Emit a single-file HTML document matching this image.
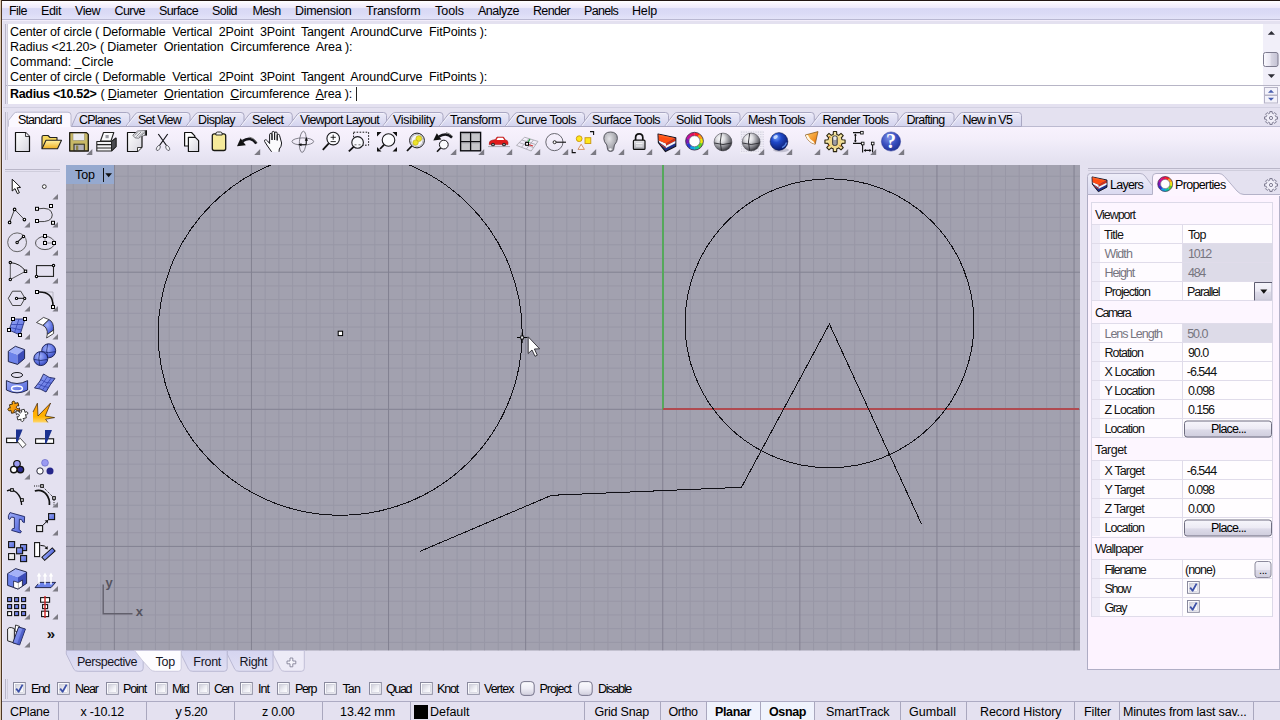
<!DOCTYPE html>
<html lang="en"><head><meta charset="utf-8"><title>Rhinoceros - Top</title>
<style>

html,body{margin:0;padding:0;}
body{width:1280px;height:720px;overflow:hidden;position:relative;background:#e4e1f0;font-family:"Liberation Sans",sans-serif;font-size:12.5px;color:#000;}
.a{position:absolute;}
.t{position:absolute;white-space:pre;line-height:20px;height:20px;}
svg{position:absolute;overflow:visible;}

</style></head>
<body>
<div class="a" style="left:2px;top:0;width:1278px;height:1px;background:#221612"></div><div class="a" style="left:2px;top:1px;width:1px;height:719px;background:#edeafc"></div>
<div class="a" style="left:0;top:1px;width:1280px;height:18px;background:linear-gradient(#ffffff 0%,#f6f2fd 20%,#eeeafa 38%,#d9d9f5 42%,#dbdbf6 70%,#e3e3f9 100%)"></div>
<div class="a" style="left:0;top:19px;width:1280px;height:1px;background:#b9b8d2"></div>
<div class="a" style="left:0;top:20px;width:1280px;height:1px;background:#f3eefb"></div>
<span class="t " style="left:9.00px;top:0.50px;font-size:12.5px;letter-spacing:-0.535px;color:#000;">File</span>
<span class="t " style="left:41.00px;top:0.50px;font-size:12.5px;letter-spacing:-0.385px;color:#000;">Edit</span>
<span class="t " style="left:75.00px;top:0.50px;font-size:12.5px;letter-spacing:-0.467px;color:#000;">View</span>
<span class="t " style="left:114.50px;top:0.50px;font-size:12.5px;letter-spacing:-0.569px;color:#000;">Curve</span>
<span class="t " style="left:159.00px;top:0.50px;font-size:12.5px;letter-spacing:-0.583px;color:#000;">Surface</span>
<span class="t " style="left:212.00px;top:0.50px;font-size:12.5px;letter-spacing:-0.559px;color:#000;">Solid</span>
<span class="t " style="left:252.50px;top:0.50px;font-size:12.5px;letter-spacing:-0.642px;color:#000;">Mesh</span>
<span class="t " style="left:295.00px;top:0.50px;font-size:12.5px;letter-spacing:-0.284px;color:#000;">Dimension</span>
<span class="t " style="left:366.00px;top:0.50px;font-size:12.5px;letter-spacing:-0.221px;color:#000;">Transform</span>
<span class="t " style="left:435.00px;top:0.50px;font-size:12.5px;letter-spacing:-0.036px;color:#000;">Tools</span>
<span class="t " style="left:478.00px;top:0.50px;font-size:12.5px;letter-spacing:-0.496px;color:#000;">Analyze</span>
<span class="t " style="left:533.00px;top:0.50px;font-size:12.5px;letter-spacing:-0.666px;color:#000;">Render</span>
<span class="t " style="left:584.00px;top:0.50px;font-size:12.5px;letter-spacing:-0.703px;color:#000;">Panels</span>
<span class="t " style="left:632.00px;top:0.50px;font-size:12.5px;letter-spacing:-0.177px;color:#000;">Help</span>
<div class="a" style="left:0;top:0;width:1px;height:720px;background:#dcc8ae"></div>
<div class="a" style="left:1px;top:0;width:1px;height:720px;background:#4c3622"></div>
<div class="a" style="left:8px;top:24px;width:1255px;height:61px;background:#fff"></div>
<div class="a" style="left:5px;top:85px;width:1275px;height:1px;background:#b7b5c6"></div>
<div class="a" style="left:8px;top:86px;width:1255px;height:18px;background:#fff"></div>
<div class="a" style="left:3px;top:107px;width:1277px;height:1px;background:#d3d1e2"></div>
<div class="a" style="left:5px;top:24px;width:1px;height:80px;background:#b9b6c8"></div>
<div class="a" style="left:7px;top:24px;width:1px;height:80px;background:#cfcddc"></div>
<span class="t " style="left:10.00px;top:21.50px;font-size:12.5px;letter-spacing:-0.146px;color:#000;">Center of circle ( Deformable  Vertical  2Point  3Point  Tangent  AroundCurve  FitPoints ):</span>
<span class="t " style="left:10.00px;top:36.50px;font-size:12.5px;letter-spacing:-0.124px;color:#000;">Radius &lt;21.20&gt; ( Diameter  Orientation  Circumference  Area ):</span>
<span class="t " style="left:10.00px;top:51.50px;font-size:12.5px;letter-spacing:-0.000px;color:#000;">Command: _Circle</span>
<span class="t " style="left:10.00px;top:66.50px;font-size:12.5px;letter-spacing:-0.146px;color:#000;">Center of circle ( Deformable  Vertical  2Point  3Point  Tangent  AroundCurve  FitPoints ):</span>
<span class="t " style="left:10.00px;top:84.00px;font-size:12.5px;letter-spacing:-0.323px;color:#000;font-weight:bold;">Radius &lt;10.52&gt;</span>
<span class="t" style="left:100.5px;top:84px;font-size:12.5px;letter-spacing:-0.147px">( <u>D</u>iameter  <u>O</u>rientation  <u>C</u>ircumference  <u>A</u>rea ):</span>
<div class="a" style="left:356px;top:87px;width:1px;height:14px;background:#222"></div>
<div class="a" style="left:1263px;top:24px;width:17px;height:61px;background:#f1eff9"></div>
<svg style="left:1263px;top:23px" width="17" height="62"><path d="M4.8 11.8 L8.4 8 L12 11.8 Z" fill="#2e2e36"/><path d="M4.8 51.2 L8.4 55 L12 51.2 Z" fill="#2e2e36"/><rect x="0.5" y="29.5" width="14.5" height="14" rx="2" fill="url(#thg)" stroke="#7c7a8e"/><defs><linearGradient id="thg" x1="0" x2="1" y1="0" y2="0"><stop offset="0" stop-color="#fbfaff"/><stop offset="0.45" stop-color="#e9e7f2"/><stop offset="0.55" stop-color="#d6d4e2"/><stop offset="1" stop-color="#c3c1d3"/></linearGradient></defs></svg>
<div class="a" style="left:1263px;top:86px;width:17px;height:18px;background:#f6f4fc"></div>
<svg style="left:1264px;top:87px" width="15" height="17"><rect x="0.5" y="0.5" width="13" height="7.5" fill="#f3f2fa" stroke="#b5b3c6"/><rect x="0.5" y="8.5" width="13" height="7.5" fill="#f3f2fa" stroke="#b5b3c6"/><path d="M4 5.8 L7 2.8 L10 5.8 Z" fill="#4a5fb0"/><path d="M4 10.8 L7 13.8 L10 10.8 Z" fill="#4a5fb0"/></svg>
<svg style="left:0;top:105px" width="1280" height="26" viewBox="0 105 1280 26"><defs><linearGradient id="tbg" x1="0" x2="0" y1="0" y2="1"><stop offset="0" stop-color="#ecebf8"/><stop offset="1" stop-color="#d3d3ee"/></linearGradient></defs><path d="M8 126.5 H1280" stroke="#bcbad0" fill="none"/><path d="M71.5 126.5 L76.7 114.7 Q77.7 112.5 80.5 112.5 L126.75 112.5 Q129.75 112.5 129.75 115.5 L129.75 126.5 Z" fill="url(#tbg)" stroke="#a9a7c2" stroke-width="1"/><path d="M125.75 126.5 L134.95 114.3 Q136.35 112.5 139.35 112.5 L187.0 112.5 Q190.0 112.5 190.0 115.5 L190.0 126.5 Z" fill="url(#tbg)" stroke="#a9a7c2" stroke-width="1"/><path d="M127.05 126.0 L135.95 114.8 Q136.95 113.5 139.35 113.5 L187.0 113.5" fill="none" stroke="#f3f2fb" stroke-width="1"/><path d="M186.0 126.5 L195.2 114.3 Q196.6 112.5 199.6 112.5 L241.0 112.5 Q244.0 112.5 244.0 115.5 L244.0 126.5 Z" fill="url(#tbg)" stroke="#a9a7c2" stroke-width="1"/><path d="M187.3 126.0 L196.2 114.8 Q197.2 113.5 199.6 113.5 L241.0 113.5" fill="none" stroke="#f3f2fb" stroke-width="1"/><path d="M240.0 126.5 L249.2 114.3 Q250.6 112.5 253.6 112.5 L289.25 112.5 Q292.25 112.5 292.25 115.5 L292.25 126.5 Z" fill="url(#tbg)" stroke="#a9a7c2" stroke-width="1"/><path d="M241.3 126.0 L250.2 114.8 Q251.2 113.5 253.6 113.5 L289.25 113.5" fill="none" stroke="#f3f2fb" stroke-width="1"/><path d="M288.25 126.5 L297.45 114.3 Q298.85 112.5 301.85 112.5 L383.5 112.5 Q386.5 112.5 386.5 115.5 L386.5 126.5 Z" fill="url(#tbg)" stroke="#a9a7c2" stroke-width="1"/><path d="M289.55 126.0 L298.45 114.8 Q299.45 113.5 301.85 113.5 L383.5 113.5" fill="none" stroke="#f3f2fb" stroke-width="1"/><path d="M382.5 126.5 L391.7 114.3 Q393.1 112.5 396.1 112.5 L440.0 112.5 Q443.0 112.5 443.0 115.5 L443.0 126.5 Z" fill="url(#tbg)" stroke="#a9a7c2" stroke-width="1"/><path d="M383.8 126.0 L392.7 114.8 Q393.7 113.5 396.1 113.5 L440.0 113.5" fill="none" stroke="#f3f2fb" stroke-width="1"/><path d="M439.0 126.5 L448.2 114.3 Q449.6 112.5 452.6 112.5 L506.0 112.5 Q509.0 112.5 509.0 115.5 L509.0 126.5 Z" fill="url(#tbg)" stroke="#a9a7c2" stroke-width="1"/><path d="M440.3 126.0 L449.2 114.8 Q450.2 113.5 452.6 113.5 L506.0 113.5" fill="none" stroke="#f3f2fb" stroke-width="1"/><path d="M505.0 126.5 L514.2 114.3 Q515.6 112.5 518.6 112.5 L581.5 112.5 Q584.5 112.5 584.5 115.5 L584.5 126.5 Z" fill="url(#tbg)" stroke="#a9a7c2" stroke-width="1"/><path d="M506.3 126.0 L515.2 114.8 Q516.2 113.5 518.6 113.5 L581.5 113.5" fill="none" stroke="#f3f2fb" stroke-width="1"/><path d="M580.5 126.5 L589.7 114.3 Q591.1 112.5 594.1 112.5 L665.5 112.5 Q668.5 112.5 668.5 115.5 L668.5 126.5 Z" fill="url(#tbg)" stroke="#a9a7c2" stroke-width="1"/><path d="M581.8 126.0 L590.7 114.8 Q591.7 113.5 594.1 113.5 L665.5 113.5" fill="none" stroke="#f3f2fb" stroke-width="1"/><path d="M664.5 126.5 L673.7 114.3 Q675.1 112.5 678.1 112.5 L737.0 112.5 Q740.0 112.5 740.0 115.5 L740.0 126.5 Z" fill="url(#tbg)" stroke="#a9a7c2" stroke-width="1"/><path d="M665.8 126.0 L674.7 114.8 Q675.7 113.5 678.1 113.5 L737.0 113.5" fill="none" stroke="#f3f2fb" stroke-width="1"/><path d="M736.0 126.5 L745.2 114.3 Q746.6 112.5 749.6 112.5 L811.25 112.5 Q814.25 112.5 814.25 115.5 L814.25 126.5 Z" fill="url(#tbg)" stroke="#a9a7c2" stroke-width="1"/><path d="M737.3 126.0 L746.2 114.8 Q747.2 113.5 749.6 113.5 L811.25 113.5" fill="none" stroke="#f3f2fb" stroke-width="1"/><path d="M810.25 126.5 L819.45 114.3 Q820.85 112.5 823.85 112.5 L895.0 112.5 Q898.0 112.5 898.0 115.5 L898.0 126.5 Z" fill="url(#tbg)" stroke="#a9a7c2" stroke-width="1"/><path d="M811.55 126.0 L820.45 114.8 Q821.45 113.5 823.85 113.5 L895.0 113.5" fill="none" stroke="#f3f2fb" stroke-width="1"/><path d="M894.0 126.5 L903.2 114.3 Q904.6 112.5 907.6 112.5 L951.0 112.5 Q954.0 112.5 954.0 115.5 L954.0 126.5 Z" fill="url(#tbg)" stroke="#a9a7c2" stroke-width="1"/><path d="M895.3 126.0 L904.2 114.8 Q905.2 113.5 907.6 113.5 L951.0 113.5" fill="none" stroke="#f3f2fb" stroke-width="1"/><path d="M950.0 126.5 L959.2 114.3 Q960.6 112.5 963.6 112.5 L1018.5 112.5 Q1021.5 112.5 1021.5 115.5 L1021.5 126.5 Z" fill="url(#tbg)" stroke="#a9a7c2" stroke-width="1"/><path d="M951.3 126.0 L960.2 114.8 Q961.2 113.5 963.6 113.5 L1018.5 113.5" fill="none" stroke="#f3f2fb" stroke-width="1"/><path d="M8.3 127.5 L8.3 120.6 L14.2 113.2 Q15 112.2 17.5 112.2 L68 112.2 Q71 112.2 71 115.2 L71 127.5 Z" fill="#fbf8ff" stroke="none"/><path d="M8.3 126.5 L8.3 120.6 L14.2 113.2 Q15 112.2 17.5 112.2 L68 112.2 Q71 112.2 71 115.2 L71 126.5" fill="none" stroke="#b9b7cd"/></svg>
<div class="a" style="left:8px;top:127px;width:1272px;height:35px;background:linear-gradient(#f8f2fd,#f3eefa 35%,#e9e6f4 75%,#e4e1f0)"></div>
<span class="t " style="left:18.00px;top:110.00px;font-size:12.5px;letter-spacing:-0.904px;color:#000;">Standard</span>
<span class="t " style="left:79.00px;top:110.00px;font-size:12.5px;letter-spacing:-0.821px;color:#000;">CPlanes</span>
<span class="t " style="left:138.00px;top:110.00px;font-size:12.5px;letter-spacing:-0.763px;color:#000;">Set View</span>
<span class="t " style="left:198.00px;top:110.00px;font-size:12.5px;letter-spacing:-0.569px;color:#000;">Display</span>
<span class="t " style="left:252.00px;top:110.00px;font-size:12.5px;letter-spacing:-0.540px;color:#000;">Select</span>
<span class="t " style="left:300.00px;top:110.00px;font-size:12.5px;letter-spacing:-0.694px;color:#000;">Viewport Layout</span>
<span class="t " style="left:393.00px;top:110.00px;font-size:12.5px;letter-spacing:-0.292px;color:#000;">Visibility</span>
<span class="t " style="left:450.00px;top:110.00px;font-size:12.5px;letter-spacing:-0.610px;color:#000;">Transform</span>
<span class="t " style="left:516.00px;top:110.00px;font-size:12.5px;letter-spacing:-0.525px;color:#000;">Curve Tools</span>
<span class="t " style="left:592.00px;top:110.00px;font-size:12.5px;letter-spacing:-0.577px;color:#000;">Surface Tools</span>
<span class="t " style="left:676.00px;top:110.00px;font-size:12.5px;letter-spacing:-0.475px;color:#000;">Solid Tools</span>
<span class="t " style="left:748.00px;top:110.00px;font-size:12.5px;letter-spacing:-0.599px;color:#000;">Mesh Tools</span>
<span class="t " style="left:822.50px;top:110.00px;font-size:12.5px;letter-spacing:-0.619px;color:#000;">Render Tools</span>
<span class="t " style="left:906.50px;top:110.00px;font-size:12.5px;letter-spacing:-0.721px;color:#000;">Drafting</span>
<span class="t " style="left:962.50px;top:110.00px;font-size:12.5px;letter-spacing:-0.830px;color:#000;">New in V5</span>
<div class="a" style="left:5px;top:112px;width:1px;height:48px;background:#b9b6c8"></div>
<div class="a" style="left:7px;top:112px;width:1px;height:48px;background:#cfcddc"></div>
<svg style="left:1263px;top:110px" width="16" height="16" viewBox="-8 -8 16 16"><path d="M6.50 -1.13 L6.50 1.13 L4.86 1.17 L4.26 2.61 L5.40 3.80 L3.80 5.40 L2.61 4.26 L1.17 4.86 L1.13 6.50 L-1.13 6.50 L-1.17 4.86 L-2.61 4.26 L-3.80 5.40 L-5.40 3.80 L-4.26 2.61 L-4.86 1.17 L-6.50 1.13 L-6.50 -1.13 L-4.86 -1.17 L-4.26 -2.61 L-5.40 -3.80 L-3.80 -5.40 L-2.61 -4.26 L-1.17 -4.86 L-1.13 -6.50 L1.13 -6.50 L1.17 -4.86 L2.61 -4.26 L3.80 -5.40 L5.40 -3.80 L4.26 -2.61 L4.86 -1.17Z" fill="#f1eff9" stroke="#7a788e" stroke-width="0.95"/><circle r="1.6" fill="none" stroke="#7a788e" stroke-width="0.95"/></svg>
<svg style="left:0;top:126px" width="1280" height="36" viewBox="0 126 1280 36"><defs>
<linearGradient id="pg" x1="0" x2="1" y1="0" y2="1"><stop offset="0" stop-color="#ffffff"/><stop offset="1" stop-color="#d6d5de"/></linearGradient>
<linearGradient id="fold" x1="0" x2="0" y1="0" y2="1"><stop offset="0" stop-color="#fff3a8"/><stop offset="1" stop-color="#f0b020"/></linearGradient>
<radialGradient id="sph" cx="0.36" cy="0.3" r="0.78"><stop offset="0" stop-color="#ffffff"/><stop offset="0.3" stop-color="#dcdce0"/><stop offset="0.7" stop-color="#77777e"/><stop offset="1" stop-color="#1c1c22"/></radialGradient>
<radialGradient id="bsph" cx="0.35" cy="0.28" r="0.8"><stop offset="0" stop-color="#6fa0ff"/><stop offset="0.35" stop-color="#1f48c8"/><stop offset="1" stop-color="#061460"/></radialGradient>
<radialGradient id="hsph" cx="0.4" cy="0.3" r="0.8"><stop offset="0" stop-color="#7f93e8"/><stop offset="0.5" stop-color="#3a50c0"/><stop offset="1" stop-color="#1c2a88"/></radialGradient>
<radialGradient id="bulb" cx="0.4" cy="0.35" r="0.7"><stop offset="0" stop-color="#e4e4e8"/><stop offset="1" stop-color="#8c8c94"/></radialGradient>
<linearGradient id="lockg" x1="0" x2="0" y1="0" y2="1"><stop offset="0" stop-color="#e8e8ec"/><stop offset="1" stop-color="#a8a8b0"/></linearGradient>
<linearGradient id="coneg" x1="0" x2="1" y1="0" y2="1"><stop offset="0" stop-color="#ffd070"/><stop offset="1" stop-color="#e87000"/></linearGradient>
</defs><path d="M15.5 132.5 H25.5 L29.5 136.5 V151.5 H15.5 Z" fill="url(#pg)" stroke="#111" stroke-width="1.2" stroke-linejoin="round"/><path d="M25.5 132.5 V136.5 H29.5" fill="#e8e8ee" stroke="#111" stroke-width="0.8"/><path d="M42 148.5 V137 Q42 135.5 43.5 135.5 H48 L50 137.5 H57 V140" fill="#f6d860" stroke="#222" stroke-width="1.1" stroke-linejoin="round"/><path d="M42 148.8 L46 140.3 H61.5 L57.5 148.8 Z" fill="url(#fold)" stroke="#222" stroke-width="1.1" stroke-linejoin="round"/><path d="M69.7 132.6 H86.5 L88.3 134.4 V151 H69.7 Z" fill="#c8b866" stroke="#1c1a12" stroke-width="1.3" stroke-linejoin="round"/><rect x="73" y="133.3" width="11.5" height="7.2" fill="#ececf0" stroke="#8c8460" stroke-width="0.5"/><rect x="74" y="144.2" width="10.3" height="6.5" fill="#b4b2ba" stroke="#2a281c" stroke-width="1"/><rect x="76" y="145.5" width="2.3" height="4.5" fill="#8c8244"/><path d="M92.3 149 V155 H86.3 Z" fill="#7c7b84"/><path d="M100.5 141 L103.5 132.5 H113.8 L111 141 Z" fill="#fafafc" stroke="#222" stroke-width="1.1" stroke-linejoin="round"/><rect x="105.5" y="135" width="3.2" height="3.2" fill="#9a9aa2"/><path d="M96.8 141.5 H111.5 L116 138 V146.5 L111.5 151 H96.8 Z" fill="#f2f2f5" stroke="#222" stroke-width="1.1" stroke-linejoin="round"/><path d="M111.5 141.5 L116 138 V146.5 L111.5 151 Z" fill="#4a4a50" stroke="#222" stroke-width="1"/><path d="M97 144.7 H111.5 M97 148 H111.5" stroke="#222" stroke-width="1.2"/><path d="M127.5 132.5 H142 V147 L137.5 151.5 H127.5 Z" fill="url(#pg)" stroke="#111" stroke-width="1.2" stroke-linejoin="round"/><path d="M137.5 151.5 V147.5 H141.5" fill="#fff" stroke="#111" stroke-width="0.8"/><path d="M132.8 135.2 L137.6 131 L145 130.6 V135.4 L141.4 136.2 L138.6 138.2 L135 137.8 Z" fill="#ececf0" stroke="#4a4a52" stroke-width="0.7" stroke-linejoin="round"/><path d="M134.6 135.6 l3.4 -3.4 M136.4 136.6 l4.6 -4.6 M138.6 137 l4.8 -4.8 M141.6 135.4 l2.8 -2.8" stroke="#77777f" stroke-width="0.8" fill="none"/><rect x="145.2" y="130.2" width="1.8" height="5.4" fill="#111"/><path d="M158.3 134 L167.2 146.5 M167.7 134 L158.8 146.5" stroke="#15151a" stroke-width="1.2" fill="none"/><ellipse cx="158.3" cy="148" rx="1.6" ry="2.8" transform="rotate(32 158.3 148)" fill="#f4f4f8" stroke="#55555e" stroke-width="0.8"/><ellipse cx="167.7" cy="148" rx="1.6" ry="2.8" transform="rotate(-32 167.7 148)" fill="#f4f4f8" stroke="#55555e" stroke-width="0.8"/><path d="M184.6 132.5 H191.5 L194.8 135.8 V146 H184.6 Z" fill="#fff" stroke="#111" stroke-width="1.2" stroke-linejoin="round"/><path d="M188.4 137.3 H195.3 L198.6 140.6 V151.5 H188.4 Z" fill="url(#pg)" stroke="#111" stroke-width="1.2" stroke-linejoin="round"/><rect x="212.3" y="133.8" width="13.4" height="16.7" rx="2" fill="#f6ea9a" stroke="#1a1a14" stroke-width="1.3"/><path d="M215.8 134 Q215.8 132 217.5 132 H220.5 Q222.2 132 222.2 134 V135 H215.8 Z" fill="#f2f2f2" stroke="#1a1a14" stroke-width="0.9"/><path d="M256.3 143.6 Q251 135.5 242.5 141.2" fill="none" stroke="#15151a" stroke-width="2.6"/><path d="M256.9 142.4 Q253.5 137.5 249.5 137.2" fill="none" stroke="#777" stroke-width="1"/><path d="M237 146.3 L240.6 138.3 L245.8 145.3 Z" fill="#111"/><path d="M260.2 149 V155 H254.2 Z" fill="#7c7b84"/><path d="M271.6 151.8 L267.5 146 L264.6 141.5 Q264 140 265.3 139.8 Q266.6 139.8 267.6 141 L269.6 143.5 V134.8 Q269.6 133.4 270.8 133.4 Q272 133.4 272 134.8 V140 V132.8 Q272 131.4 273.3 131.4 Q274.6 131.4 274.6 132.8 V140 V133.3 Q274.6 132 275.9 132 Q277.2 132 277.2 133.3 V140.4 V135.6 Q277.2 134.4 278.4 134.4 Q279.6 134.4 279.6 135.6 L281.6 143 Q281.6 146.5 279.3 149 L279 151.8" fill="#fbfbfd" stroke="#18181c" stroke-width="1" stroke-linejoin="round"/><ellipse cx="302.8" cy="141.5" rx="10.8" ry="3.6" fill="none" stroke="#55555e" stroke-width="0.7"/><ellipse cx="302.8" cy="141.8" rx="3.4" ry="10.6" fill="none" stroke="#55555e" stroke-width="0.7" transform="rotate(4 302.8 141.8)"/><path d="M304.8 140.8 L306.3 137 L308 140.8 Z" fill="#111"/><path d="M301.5 143.2 L298 144.6 L301.5 146.2 Z" fill="#111"/><path d="M306.3 140 V144.6 H300" stroke="#111" stroke-width="0.9" fill="none"/><circle cx="333.2" cy="138.6" r="6.3" fill="#fbfbfe" stroke="#18181c" stroke-width="1.1"/><path d="M328.8 143.4 L322.8 149.8" stroke="#111" stroke-width="1.8"/><path d="M330.6 137.3 H335.8 M333.2 134.7 V139.9 M330.6 141.6 H335.8" stroke="#111" stroke-width="0.9"/><rect x="353.6" y="132.2" width="15" height="13" fill="none" stroke="#111" stroke-width="1" stroke-dasharray="1.6 1.4"/><circle cx="357.6" cy="142.4" r="5.8" fill="#f8f8fc" stroke="#18181c" stroke-width="1.1"/><path d="M353.6 146.8 L348.8 151.3" stroke="#111" stroke-width="1.8"/><path d="M354.5 144.8 H356.5 M358.5 144.8 H360.5" stroke="#333" stroke-width="0.7"/><path d="M377 132 h4.5 l-4.5 4.5 Z M397 132 v4.5 l-4.5 -4.5 Z M377 151.6 v-4.5 l4.5 4.5 Z M397 151.6 h-4.5 l4.5 -4.5 Z" fill="#111"/><circle cx="388.5" cy="140" r="6.3" fill="#fbfbfe" stroke="#18181c" stroke-width="1.1"/><path d="M384.2 144.6 L380 149" stroke="#111" stroke-width="1.8"/><circle cx="417" cy="140.5" r="7.4" fill="#f6f6fa" stroke="#18181c" stroke-width="1"/><circle cx="417" cy="140.5" r="6" fill="none" stroke="#88888e" stroke-width="0.6"/><circle cx="418.8" cy="138.6" r="2.9" fill="#ece428" stroke="#b8a810" stroke-width="0.6"/><circle cx="415.6" cy="142.6" r="2.7" fill="#ece428" stroke="#b8a810" stroke-width="0.6"/><path d="M411.8 146 L407 151" stroke="#111" stroke-width="1.8"/><path d="M452 137.6 Q446.5 131.8 439 136.6" fill="none" stroke="#15151a" stroke-width="2.4"/><path d="M452.7 136.4 Q449.5 133 446 132.6" fill="none" stroke="#777" stroke-width="1"/><path d="M433.3 140.6 L436.8 133.2 L441.4 139.6 Z" fill="#111"/><circle cx="443.8" cy="144.6" r="4.4" fill="#fbfbfe" stroke="#18181c" stroke-width="1"/><path d="M440.6 148 L437 151.8" stroke="#111" stroke-width="1.6"/><path d="M456.3 149 V155 H450.3 Z" fill="#7c7b84"/><rect x="460.6" y="132.4" width="20" height="18.4" fill="#c6c6ca" stroke="#0c0c10" stroke-width="1.4"/><path d="M470.6 132.4 V150.8 M460.6 141.6 H480.6" stroke="#0c0c10" stroke-width="1.3"/><path d="M461.5 133.6 H469.6 M471.6 133.6 H479.6 M461.5 142.8 H469.6 M471.6 142.8 H479.6" stroke="#8e8e96" stroke-width="0.8"/><path d="M484.2 149 V155 H478.2 Z" fill="#7c7b84"/><path d="M489.2 144.6 Q488.6 141 492 140.2 L495.4 139.6 L497 137 H503.5 L505.5 140 L507.2 140.6 Q508.4 142 508 144.6 Z" fill="#e01c1c" stroke="#9c1010" stroke-width="0.5"/><path d="M497.8 137.8 H502.8 L504.3 140 H496.5 Z" fill="#fff"/><circle cx="493" cy="144.6" r="1.9" fill="#222"/><circle cx="504" cy="144.6" r="1.9" fill="#222"/><circle cx="493" cy="144.6" r="0.8" fill="#ccc"/><circle cx="504" cy="144.6" r="0.8" fill="#ccc"/><path d="M488 146.6 H510" stroke="#9a9aa2" stroke-width="0.8"/><path d="M512.2 149 V155 H506.2 Z" fill="#7c7b84"/><path d="M516.5 145.4 L524.5 137.2 L538 141.4 L531.2 151 Z M519.2 142.6 L533.6 147.6 M521.8 140 L536 144.6 M521.5 147.2 L529 138.6 M526.4 149 L533.5 140" fill="none" stroke="#a2a2aa" stroke-width="0.8"/><path d="M527 143.8 L530 139.2" stroke="#2ea040" stroke-width="1.2"/><path d="M527.6 144.3 L533 146" stroke="#d03030" stroke-width="1.2"/><rect x="525.6" y="142.4" width="2.9" height="2.9" fill="#fff" stroke="#000" stroke-width="1"/><path d="M540.2 149 V155 H534.2 Z" fill="#7c7b84"/><circle cx="554.4" cy="142.1" r="8.6" fill="none" stroke="#5a5a62" stroke-width="0.9"/><path d="M555.5 142.2 H566" stroke="#111" stroke-width="1.1"/><circle cx="554.6" cy="142.2" r="1.5" fill="#fff" stroke="#111" stroke-width="0.9"/><path d="M568.2 149 V155 H562.2 Z" fill="#7c7b84"/><circle cx="579.2" cy="138.7" r="2.9" fill="#ffe81a" stroke="#c89410" stroke-width="0.9"/><rect x="585" y="137.7" width="5.8" height="5.8" fill="#ffe81a" stroke="#c89410" stroke-width="0.9"/><path d="M578 149.4 L581.2 144.2 L584.4 149.4 Z" fill="#fdf6f0" stroke="#d08858" stroke-width="0.9"/><path d="M590 131.6 H593.6 V135" fill="none" stroke="#111" stroke-width="1.1"/><path d="M572.2 149.2 V152.6 H575.8" fill="none" stroke="#111" stroke-width="1.1"/><path d="M596.2 149 V155 H590.2 Z" fill="#7c7b84"/><path d="M610.6 132 Q617.4 132 617.4 138.6 Q617.4 141.6 614.4 145 L613.6 149.6 Q613.4 151.4 610.6 151.4 Q607.8 151.4 607.6 149.6 L606.8 145 Q603.8 141.6 603.8 138.6 Q603.8 132 610.6 132 Z" fill="url(#bulb)" stroke="#4a4a52" stroke-width="0.9"/><ellipse cx="610.4" cy="149.3" rx="1.5" ry="1.1" fill="#f4f4f8"/><path d="M624.2 149 V155 H618.2 Z" fill="#7c7b84"/><path d="M635.6 140.4 V137.6 Q635.6 133.8 639.2 133.8 Q642.8 133.8 642.8 137.6 V140.4" fill="none" stroke="#111" stroke-width="1.7"/><rect x="633.4" y="140.2" width="11.6" height="9.2" rx="1" fill="url(#lockg)" stroke="#111" stroke-width="1.2"/><path d="M636 143.6 H642.5 M636 146 H642.5" stroke="#f8f8fa" stroke-width="0.9"/><path d="M652.2 149 V155 H646.2 Z" fill="#7c7b84"/><g transform="translate(0.00 0.00)"><path d="M658 134 L675.8 137.7 V146.2 L665.5 151.6 L658.4 142.6 Z" fill="#1c2f8c" stroke="#14141e" stroke-width="1.1" stroke-linejoin="round"/><path d="M658.6 140.2 L666 143.4 V147 L659.4 142.6 Z" fill="#f4f4f8"/><path d="M659.8 143.4 L666 147.4 V148.6 L661.4 145.6 Z" fill="#e04020"/><path d="M666 143.4 L675.3 138.6 V141 L666 145.8 Z" fill="#d83010"/><path d="M666 145.8 L675.3 141 V143.2 L666 148 Z" fill="#f4f4f8"/><path d="M658.5 134.5 L675.3 138.2 L666 143.4 L658.7 140.4 Z" fill="#ff4c12"/><path d="M658.5 134.5 L675.3 138.2 L670 138.4 L659 136.4 Z" fill="#ff6a28" opacity="0.7"/></g><path d="M680.2 149 V155 H674.2 Z" fill="#7c7b84"/><g transform="translate(694.5 141.2) scale(1.0) translate(-694.5 -141.2)"><path d="M694.32 132.40 A8.8 8.8 0 0 1 699.81 134.19 L697.82 136.82 A5.5 5.5 0 0 0 694.39 135.70 Z" fill="#ff2020"/><path d="M699.53 133.98 A8.8 8.8 0 0 1 702.92 138.65 L699.76 139.61 A5.5 5.5 0 0 0 697.64 136.69 Z" fill="#ff9a10"/><path d="M702.81 138.31 A8.8 8.8 0 0 1 702.81 144.09 L699.70 143.00 A5.5 5.5 0 0 0 699.70 139.40 Z" fill="#f4e810"/><path d="M702.92 143.75 A8.8 8.8 0 0 1 699.53 148.42 L697.64 145.71 A5.5 5.5 0 0 0 699.76 142.79 Z" fill="#60d020"/><path d="M699.81 148.21 A8.8 8.8 0 0 1 694.32 150.00 L694.39 146.70 A5.5 5.5 0 0 0 697.82 145.58 Z" fill="#10c8a0"/><path d="M694.68 150.00 A8.8 8.8 0 0 1 689.19 148.21 L691.18 145.58 A5.5 5.5 0 0 0 694.61 146.70 Z" fill="#10a0e8"/><path d="M689.47 148.42 A8.8 8.8 0 0 1 686.08 143.75 L689.24 142.79 A5.5 5.5 0 0 0 691.36 145.71 Z" fill="#2838d0"/><path d="M686.19 144.09 A8.8 8.8 0 0 1 686.19 138.31 L689.30 139.40 A5.5 5.5 0 0 0 689.30 143.00 Z" fill="#7a18b8"/><path d="M686.08 138.65 A8.8 8.8 0 0 1 689.47 133.98 L691.36 136.69 A5.5 5.5 0 0 0 689.24 139.61 Z" fill="#c010a0"/><path d="M689.19 134.19 A8.8 8.8 0 0 1 694.68 132.40 L694.61 135.70 A5.5 5.5 0 0 0 691.18 136.82 Z" fill="#e01060"/><circle cx="694.5" cy="141.2" r="8.9" fill="none" stroke="#2a1a3a" stroke-width="0.9" opacity="0.85"/><circle cx="694.5" cy="141.2" r="5.5" fill="#fff" stroke="#4a4a60" stroke-width="0.6"/></g><path d="M708.2 149 V155 H702.2 Z" fill="#7c7b84"/><circle cx="723" cy="142" r="8.9" fill="url(#sph)" stroke="#4a4a50" stroke-width="0.6"/><path d="M714.2 143 Q723 146 731.8 143" fill="none" stroke="#2a2a30" stroke-width="0.9"/><path d="M721.5 133.2 Q719 142 721.5 150.8" fill="none" stroke="#2a2a30" stroke-width="0.9"/><rect x="740" y="130.5" width="23" height="23" fill="#efedf6"/><path d="M741.0 131.5h1.2v1.2h-1.2zM743.4 131.5h1.2v1.2h-1.2zM745.8 131.5h1.2v1.2h-1.2zM748.2 131.5h1.2v1.2h-1.2zM750.6 131.5h1.2v1.2h-1.2zM753.0 131.5h1.2v1.2h-1.2zM755.4 131.5h1.2v1.2h-1.2zM757.8 131.5h1.2v1.2h-1.2zM760.2 131.5h1.2v1.2h-1.2zM762.6 131.5h1.2v1.2h-1.2zM741.0 133.9h1.2v1.2h-1.2zM743.4 133.9h1.2v1.2h-1.2zM745.8 133.9h1.2v1.2h-1.2zM748.2 133.9h1.2v1.2h-1.2zM750.6 133.9h1.2v1.2h-1.2zM753.0 133.9h1.2v1.2h-1.2zM755.4 133.9h1.2v1.2h-1.2zM757.8 133.9h1.2v1.2h-1.2zM760.2 133.9h1.2v1.2h-1.2zM762.6 133.9h1.2v1.2h-1.2zM741.0 136.3h1.2v1.2h-1.2zM743.4 136.3h1.2v1.2h-1.2zM745.8 136.3h1.2v1.2h-1.2zM748.2 136.3h1.2v1.2h-1.2zM750.6 136.3h1.2v1.2h-1.2zM753.0 136.3h1.2v1.2h-1.2zM755.4 136.3h1.2v1.2h-1.2zM757.8 136.3h1.2v1.2h-1.2zM760.2 136.3h1.2v1.2h-1.2zM762.6 136.3h1.2v1.2h-1.2zM741.0 138.7h1.2v1.2h-1.2zM743.4 138.7h1.2v1.2h-1.2zM745.8 138.7h1.2v1.2h-1.2zM748.2 138.7h1.2v1.2h-1.2zM750.6 138.7h1.2v1.2h-1.2zM753.0 138.7h1.2v1.2h-1.2zM755.4 138.7h1.2v1.2h-1.2zM757.8 138.7h1.2v1.2h-1.2zM760.2 138.7h1.2v1.2h-1.2zM762.6 138.7h1.2v1.2h-1.2zM741.0 141.1h1.2v1.2h-1.2zM743.4 141.1h1.2v1.2h-1.2zM745.8 141.1h1.2v1.2h-1.2zM748.2 141.1h1.2v1.2h-1.2zM750.6 141.1h1.2v1.2h-1.2zM753.0 141.1h1.2v1.2h-1.2zM755.4 141.1h1.2v1.2h-1.2zM757.8 141.1h1.2v1.2h-1.2zM760.2 141.1h1.2v1.2h-1.2zM762.6 141.1h1.2v1.2h-1.2zM741.0 143.5h1.2v1.2h-1.2zM743.4 143.5h1.2v1.2h-1.2zM745.8 143.5h1.2v1.2h-1.2zM748.2 143.5h1.2v1.2h-1.2zM750.6 143.5h1.2v1.2h-1.2zM753.0 143.5h1.2v1.2h-1.2zM755.4 143.5h1.2v1.2h-1.2zM757.8 143.5h1.2v1.2h-1.2zM760.2 143.5h1.2v1.2h-1.2zM762.6 143.5h1.2v1.2h-1.2zM741.0 145.9h1.2v1.2h-1.2zM743.4 145.9h1.2v1.2h-1.2zM745.8 145.9h1.2v1.2h-1.2zM748.2 145.9h1.2v1.2h-1.2zM750.6 145.9h1.2v1.2h-1.2zM753.0 145.9h1.2v1.2h-1.2zM755.4 145.9h1.2v1.2h-1.2zM757.8 145.9h1.2v1.2h-1.2zM760.2 145.9h1.2v1.2h-1.2zM762.6 145.9h1.2v1.2h-1.2zM741.0 148.3h1.2v1.2h-1.2zM743.4 148.3h1.2v1.2h-1.2zM745.8 148.3h1.2v1.2h-1.2zM748.2 148.3h1.2v1.2h-1.2zM750.6 148.3h1.2v1.2h-1.2zM753.0 148.3h1.2v1.2h-1.2zM755.4 148.3h1.2v1.2h-1.2zM757.8 148.3h1.2v1.2h-1.2zM760.2 148.3h1.2v1.2h-1.2zM762.6 148.3h1.2v1.2h-1.2zM741.0 150.7h1.2v1.2h-1.2zM743.4 150.7h1.2v1.2h-1.2zM745.8 150.7h1.2v1.2h-1.2zM748.2 150.7h1.2v1.2h-1.2zM750.6 150.7h1.2v1.2h-1.2zM753.0 150.7h1.2v1.2h-1.2zM755.4 150.7h1.2v1.2h-1.2zM757.8 150.7h1.2v1.2h-1.2zM760.2 150.7h1.2v1.2h-1.2zM762.6 150.7h1.2v1.2h-1.2z" fill="#d2d0de"/><circle cx="751.2" cy="142" r="8.9" fill="url(#sph)" stroke="#4a4a50" stroke-width="0.6"/><path d="M742.4000000000001 143 Q751.2 146 760.0 143" fill="none" stroke="#2a2a30" stroke-width="0.9"/><path d="M749.7 133.2 Q747.2 142 749.7 150.8" fill="none" stroke="#2a2a30" stroke-width="0.9"/><path d="M764.2 149 V155 H758.2 Z" fill="#7c7b84"/><ellipse cx="781" cy="150" rx="8" ry="2.2" fill="#b8b6c8" opacity="0.8"/><circle cx="779" cy="141.5" r="8.9" fill="url(#bsph)" stroke="#06103c" stroke-width="0.5"/><ellipse cx="775.6" cy="137" rx="2.4" ry="1.6" fill="#cfe0ff" opacity="0.9" transform="rotate(-30 775.6 137)"/><path d="M782 147.5 Q785.5 146 786.5 142.5" stroke="#6fa0ff" stroke-width="1.2" fill="none" opacity="0.8"/><path d="M792.2 149 V155 H786.2 Z" fill="#7c7b84"/><path d="M805.3 135 L818 131.6 L815.2 144.2 Q808.5 143 805.3 135 Z" fill="url(#coneg)" stroke="#7a4a10" stroke-width="0.7" stroke-linejoin="round"/><path d="M805.6 135.2 Q808.5 142.5 815 144 L813.6 141.5 Q809.5 139.5 807.8 135 Z" fill="#fff8e8"/><path d="M820.2 149 V155 H814.2 Z" fill="#7c7b84"/><path d="M845.07 140.00 L845.07 143.20 L842.07 143.42 L841.28 145.32 L843.25 147.60 L841.00 149.85 L838.72 147.88 L836.82 148.67 L836.60 151.67 L833.40 151.67 L833.18 148.67 L831.28 147.88 L829.00 149.85 L826.75 147.60 L828.72 145.32 L827.93 143.42 L824.93 143.20 L824.93 140.00 L827.93 139.78 L828.72 137.88 L826.75 135.60 L829.00 133.35 L831.28 135.32 L833.18 134.53 L833.40 131.53 L836.60 131.53 L836.82 134.53 L838.72 135.32 L841.00 133.35 L843.25 135.60 L841.28 137.88 L842.07 139.78Z" fill="#f4e4a0" stroke="#2a2410" stroke-width="1.1" stroke-linejoin="round"/><circle cx="835" cy="141.6" r="6.4" fill="#f0d888"/><path d="M828.5 146 l1.5 -1 M841 146.5 l-1.5 -1 M829 136.5 l1.5 1" stroke="#d07018" stroke-width="1.3"/><rect x="832.6" y="136" width="4.6" height="9.4" rx="1.6" fill="#9c9ca4" stroke="#2a2a30" stroke-width="0.9"/><rect x="833.4" y="136.6" width="3" height="3.4" rx="1" fill="#e6e6ea"/><path d="M848.2 149 V155 H842.2 Z" fill="#7c7b84"/><path d="M853 132.6 H860.4 M853 143.4 H861.4 M855.4 134 V142 M862.6 145 V152.4 M872.6 145 V152.4 M864.4 150.4 H870.8" stroke="#111" stroke-width="1.1" fill="none"/><path d="M855.4 133.4 l-1.5 2.2 h3 Z M855.4 142.6 l-1.5 -2.2 h3 Z M863.6 150.4 l2.2 -1.5 v3 Z M871.6 150.4 l-2.2 -1.5 v3 Z" fill="#111"/><rect x="860.6" y="131.4" width="2.6" height="2.6" fill="#fff" stroke="#111" stroke-width="0.9"/><rect x="861.4" y="142.2" width="2.6" height="2.6" fill="#fff" stroke="#111" stroke-width="0.9"/><rect x="871.4" y="142.2" width="2.6" height="2.6" fill="#fff" stroke="#111" stroke-width="0.9"/><path d="M876.2 149 V155 H870.2 Z" fill="#7c7b84"/><circle cx="891" cy="141.5" r="9.6" fill="url(#hsph)" stroke="#2a3a98" stroke-width="0.5"/><text x="891" y="148.4" text-anchor="middle" font-family="Liberation Serif,serif" font-weight="bold" font-size="20" fill="#fff">?</text><path d="M904.2 149 V155 H898.2 Z" fill="#7c7b84"/></svg>
<svg style="left:66px;top:165px" width="1014" height="485.5" viewBox="66 165 1014 485.5"><defs><clipPath id="vclip"><rect x="66" y="165" width="1014" height="485.5"/></clipPath></defs><rect x="66" y="165" width="1014" height="485.5" fill="#a2a1af"/><g clip-path="url(#vclip)"><path d="M73.22 165 V650.5 M86.93 165 V650.5 M100.64 165 V650.5 M128.06 165 V650.5 M141.77 165 V650.5 M155.48 165 V650.5 M169.19 165 V650.5 M182.90 165 V650.5 M196.61 165 V650.5 M210.32 165 V650.5 M224.03 165 V650.5 M237.74 165 V650.5 M265.16 165 V650.5 M278.87 165 V650.5 M292.58 165 V650.5 M306.29 165 V650.5 M320.00 165 V650.5 M333.71 165 V650.5 M347.42 165 V650.5 M361.13 165 V650.5 M374.84 165 V650.5 M402.26 165 V650.5 M415.97 165 V650.5 M429.68 165 V650.5 M66 176.23 H1080 M443.39 165 V650.5 M66 189.94 H1080 M457.10 165 V650.5 M66 203.65 H1080 M470.81 165 V650.5 M66 217.36 H1080 M484.52 165 V650.5 M66 231.07 H1080 M498.23 165 V650.5 M66 244.78 H1080 M511.94 165 V650.5 M66 258.49 H1080 M539.36 165 V650.5 M66 285.91 H1080 M553.07 165 V650.5 M66 299.62 H1080 M566.78 165 V650.5 M66 313.33 H1080 M580.49 165 V650.5 M66 327.04 H1080 M594.20 165 V650.5 M66 340.75 H1080 M607.91 165 V650.5 M66 354.46 H1080 M621.62 165 V650.5 M66 368.17 H1080 M635.33 165 V650.5 M66 381.88 H1080 M649.04 165 V650.5 M66 395.59 H1080 M676.46 165 V650.5 M66 423.01 H1080 M690.17 165 V650.5 M66 436.72 H1080 M703.88 165 V650.5 M66 450.43 H1080 M717.59 165 V650.5 M66 464.14 H1080 M731.30 165 V650.5 M66 477.85 H1080 M745.01 165 V650.5 M66 491.56 H1080 M758.72 165 V650.5 M66 505.27 H1080 M772.43 165 V650.5 M66 518.98 H1080 M786.14 165 V650.5 M66 532.69 H1080 M813.56 165 V650.5 M66 560.11 H1080 M827.27 165 V650.5 M66 573.82 H1080 M840.98 165 V650.5 M66 587.53 H1080 M854.69 165 V650.5 M66 601.24 H1080 M868.40 165 V650.5 M66 614.95 H1080 M882.11 165 V650.5 M66 628.66 H1080 M895.82 165 V650.5 M66 642.37 H1080 M909.53 165 V650.5 M923.24 165 V650.5 M950.66 165 V650.5 M964.37 165 V650.5 M978.08 165 V650.5 M991.79 165 V650.5 M1005.50 165 V650.5 M1019.21 165 V650.5 M1032.92 165 V650.5 M1046.63 165 V650.5 M1060.34 165 V650.5" stroke="#9897a6" stroke-width="1" fill="none"/><path d="M114.35 165 V650.5 M251.45 165 V650.5 M388.55 165 V650.5 M525.65 165 V650.5 M66 272.20 H1080 M662.75 165 V650.5 M66 409.30 H1080 M799.85 165 V650.5 M66 546.40 H1080 M936.95 165 V650.5 M1074.05 165 V650.5" stroke="#828191" stroke-width="1" fill="none"/><path d="M663.0 165 V410.0" stroke="#55a85b" stroke-width="2" fill="none"/><path d="M663.0 409.0 H1079" stroke="#b04a50" stroke-width="2" fill="none"/><circle cx="340.2" cy="333.3" r="182" fill="none" stroke="#111016" stroke-width="1" shape-rendering="crispEdges"/><circle cx="829.5" cy="323.3" r="144.5" fill="none" stroke="#111016" stroke-width="1" shape-rendering="crispEdges"/><path d="M419.7 551.5 L551.5 495.3 L741.5 487.3 L829.4 324 L921.3 523.6" fill="none" stroke="#111016" stroke-width="1" shape-rendering="crispEdges"/><rect x="338.2" y="331.2" width="4.4" height="4.4" fill="#fff" stroke="#000" stroke-width="1"/><path d="M517 337.5 H527.5 M522.2 332.5 V343" stroke="#000" stroke-width="1" fill="none"/><rect x="520.7" y="336" width="3" height="3" fill="#e8e8ee" stroke="#000" stroke-width="0.8"/><path d="M528.2 336.8 L528.2 353.5 L532 350 L535 356.3 L537.3 355.2 L534.4 349 L539.6 348.8 Z" fill="#fff" stroke="#2a2930" stroke-width="0.9" stroke-linejoin="round"/><path d="M103.2 584.4 V613.8 H132.5" stroke="#62606c" stroke-width="1.4" fill="none"/></g><rect x="66" y="165" width="48" height="19" fill="#95a9cf"/><path d="M103.5 168 V182" stroke="#111" stroke-width="1"/><path d="M105.3 173.3 H112 L108.65 177.2 Z" fill="#111"/></svg>
<span class="t " style="left:75.00px;top:165.00px;font-size:12.5px;letter-spacing:-0.051px;color:#000;">Top</span>
<span class="t " style="left:105.40px;top:572.60px;font-size:13px;letter-spacing:-0.430px;color:#55535e;font-weight:bold;">y</span>
<span class="t " style="left:135.80px;top:602.20px;font-size:13px;letter-spacing:-0.830px;color:#55535e;font-weight:bold;">x</span>
<svg style="left:60px;top:650px" width="260" height="26" viewBox="60 650 260 26"><defs><linearGradient id="vtg" x1="0" x2="0" y1="0" y2="1"><stop offset="0" stop-color="#d5d5f0"/><stop offset="1" stop-color="#e0dff3"/></linearGradient></defs><path d="M273 650.5 L273 654 L280.6 669.3 Q281.8 671.3 284.8 671.3 L301.3 671.3 Q304.3 671.3 304.3 668.3 L304.3 650.5 Z" fill="#edebf7" stroke="#bcbad2" stroke-width="0.9"/><path d="M227.2 650.5 L227.2 654 L234.79999999999998 669.3 Q236.0 671.3 239.0 671.3 L270 671.3 Q273 671.3 273 668.3 L273 650.5 Z" fill="url(#vtg)" stroke="#b6b4d0" stroke-width="0.9"/><path d="M181 650.5 L181 654 L188.6 669.3 Q189.8 671.3 192.8 671.3 L224.2 671.3 Q227.2 671.3 227.2 668.3 L227.2 650.5 Z" fill="url(#vtg)" stroke="#b6b4d0" stroke-width="0.9"/><path d="M66.3 650.5 L66.3 654 L73.89999999999999 669.3 Q75.1 671.3 78.1 671.3 L140.2 671.3 Q143.2 671.3 143.2 668.3 L143.2 650.5 Z" fill="url(#vtg)" stroke="#b6b4d0" stroke-width="0.9"/><path d="M134.5 650.5 L142 660 L150.5 669.6 Q152.3 671.3 155.3 671.3 L178.2 671.3 Q181.2 671.3 181.2 668.3 L181.2 650.5 Z" fill="#fdfcff" stroke="#c4c2d8" stroke-width="0.8"/><path d="M290 658 h2.8 v3 h3 v2.8 h-3 v3 h-2.8 v-3 h-3 v-2.8 h3 Z" fill="#f6f5fc" stroke="#858399" stroke-width="0.9"/></svg>
<span class="t " style="left:77.00px;top:652.00px;font-size:12.5px;letter-spacing:-0.483px;color:#15141f;">Perspective</span>
<span class="t " style="left:155.60px;top:652.00px;font-size:12.5px;letter-spacing:-0.251px;color:#15141f;">Top</span>
<span class="t " style="left:193.30px;top:652.00px;font-size:12.5px;letter-spacing:-0.295px;color:#15141f;">Front</span>
<span class="t " style="left:239.40px;top:652.00px;font-size:12.5px;letter-spacing:-0.276px;color:#15141f;">Right</span>
<div class="a" style="left:5px;top:169px;width:55px;height:1px;background:#b9b6c8"></div>
<div class="a" style="left:5px;top:171px;width:55px;height:1px;background:#cfcddc"></div>
<svg style="left:0;top:172px" width="66" height="480" viewBox="0 172 66 480"><defs>
<linearGradient id="blg" x1="0" x2="1" y1="0" y2="1"><stop offset="0" stop-color="#9cabf8"/><stop offset="1" stop-color="#4c60d8"/></linearGradient>
<radialGradient id="bls" cx="0.4" cy="0.35" r="0.75"><stop offset="0" stop-color="#a8b6fa"/><stop offset="0.6" stop-color="#5c70e0"/><stop offset="1" stop-color="#2c3ca8"/></radialGradient>
<linearGradient id="org" x1="0" x2="1" y1="0" y2="1"><stop offset="0" stop-color="#ffc020"/><stop offset="1" stop-color="#f08000"/></linearGradient>
<linearGradient id="org2" x1="0" x2="0" y1="0" y2="1"><stop offset="0" stop-color="#ff9a10"/><stop offset="0.7" stop-color="#ffb400"/><stop offset="1" stop-color="#ffd870"/></linearGradient>
<linearGradient id="wsq" x1="0" x2="1" y1="0" y2="1"><stop offset="0" stop-color="#ffffff"/><stop offset="1" stop-color="#d8d8dc"/></linearGradient>
</defs><path d="M12.2 179.2 V191 L15 188.6 L17.4 193.6 L19.4 192.7 L17.1 187.8 L20.6 187.4 Z" fill="#fff" stroke="#111" stroke-width="1" stroke-linejoin="round"/><circle cx="44.3" cy="186.6" r="1.9" fill="#fff" stroke="#222" stroke-width="0.9"/><path d="M58 194 V199.6 H52.4 Z" fill="#7c7b84"/><path d="M9.6 222.4 L14.6 209.4 L24.4 219.6" fill="none" stroke="#333" stroke-width="0.9"/><circle cx="9.6" cy="222.4" r="1.3" fill="#fff" stroke="#000" stroke-width="1.1"/><circle cx="14.6" cy="209.4" r="1.3" fill="#fff" stroke="#000" stroke-width="1.1"/><circle cx="24.4" cy="219.6" r="1.3" fill="#fff" stroke="#000" stroke-width="1.1"/><path d="M30 222 V227.6 H24.4 Z" fill="#7c7b84"/><path d="M38 208.8 Q51.5 206.5 52.3 214.8 Q52.5 222.6 38 221.6" fill="none" stroke="#333" stroke-width="0.9"/><rect x="35.50" y="207.30" width="3.0" height="3.0" fill="#fff" stroke="#000" stroke-width="1.0"/><rect x="49.50" y="204.50" width="3.0" height="3.0" fill="#fff" stroke="#000" stroke-width="1.0"/><rect x="35.50" y="219.50" width="3.0" height="3.0" fill="#fff" stroke="#000" stroke-width="1.0"/><rect x="51.50" y="221.30" width="3.0" height="3.0" fill="#fff" stroke="#000" stroke-width="1.0"/><path d="M58 222 V227.6 H52.4 Z" fill="#7c7b84"/><circle cx="17.1" cy="242.3" r="9.4" fill="none" stroke="#555" stroke-width="0.9"/><path d="M17.1 242.3 L23.5 236.4" stroke="#111" stroke-width="1.1"/><circle cx="17.1" cy="242.5" r="1.2" fill="#fff" stroke="#000" stroke-width="1.1"/><circle cx="23.5" cy="236.4" r="1.2" fill="#fff" stroke="#000" stroke-width="1.1"/><path d="M30 250 V255.6 H24.4 Z" fill="#7c7b84"/><ellipse cx="45" cy="243" rx="9.5" ry="6.6" fill="none" stroke="#444" stroke-width="0.9"/><path d="M45 236 V243 H54" stroke="#666" stroke-width="0.7" fill="none"/><rect x="43.50" y="234.50" width="3.0" height="3.0" fill="#fff" stroke="#000" stroke-width="1.0"/><rect x="43.50" y="241.50" width="3.0" height="3.0" fill="#fff" stroke="#000" stroke-width="1.0"/><rect x="52.50" y="241.50" width="3.0" height="3.0" fill="#fff" stroke="#000" stroke-width="1.0"/><path d="M58 250 V255.6 H52.4 Z" fill="#7c7b84"/><path d="M10.3 262.6 Q20.5 263.5 25.5 271.3" fill="none" stroke="#222" stroke-width="1"/><path d="M10.3 262.6 V279.5 L25.5 271.3" fill="none" stroke="#333" stroke-width="0.8"/><circle cx="10.3" cy="262.6" r="1.2" fill="#fff" stroke="#000" stroke-width="1.1"/><circle cx="10.3" cy="279.5" r="1.2" fill="#fff" stroke="#000" stroke-width="1.1"/><rect x="24.30" y="270.10" width="2.4" height="2.4" fill="#fff" stroke="#000" stroke-width="1.0"/><path d="M30 278 V283.6 H24.4 Z" fill="#7c7b84"/><rect x="36.5" y="265.6" width="17" height="10.8" fill="none" stroke="#222" stroke-width="1.1"/><circle cx="53.5" cy="265.6" r="1.2" fill="#fff" stroke="#000" stroke-width="1.1"/><circle cx="36.5" cy="276.4" r="1.2" fill="#fff" stroke="#000" stroke-width="1.1"/><path d="M58 278 V283.6 H52.4 Z" fill="#7c7b84"/><path d="M8.3 298.3 L12.5 291.2 H20.8 L25 298.3 L20.8 305.5 H12.5 Z" fill="none" stroke="#333" stroke-width="0.9"/><path d="M16.7 298.3 H25" stroke="#111" stroke-width="1"/><circle cx="16.5" cy="298.4" r="1.1" fill="#fff" stroke="#000" stroke-width="1.1"/><circle cx="24.7" cy="298.4" r="1.1" fill="#fff" stroke="#000" stroke-width="1.1"/><path d="M30 306 V311.6 H24.4 Z" fill="#7c7b84"/><path d="M44 292 H53 V301" fill="none" stroke="#a8a8b4" stroke-width="0.8"/><path d="M38.5 292 Q53 291.5 53 306" fill="none" stroke="#111" stroke-width="1.6"/><rect x="35.50" y="290.50" width="3.0" height="3.0" fill="#fff" stroke="#000" stroke-width="1.0"/><rect x="51.50" y="305.50" width="3.0" height="3.0" fill="#fff" stroke="#000" stroke-width="1.0"/><path d="M58 306 V311.6 H52.4 Z" fill="#7c7b84"/><path d="M13 319 L25 319 L20 335 L9 330 Z" fill="url(#blg)" stroke="#1c2460" stroke-width="0.8"/><path d="M19 319 L14.5 332.5 M11 324.5 L23.3 324.5 M10 327.5 L21.5 330" stroke="#3444b0" stroke-width="0.8" fill="none"/><rect x="11.50" y="317.50" width="3.0" height="3.0" fill="#fff" stroke="#000" stroke-width="1.0"/><rect x="23.50" y="317.50" width="3.0" height="3.0" fill="#fff" stroke="#000" stroke-width="1.0"/><rect x="7.50" y="328.50" width="3.0" height="3.0" fill="#fff" stroke="#000" stroke-width="1.0"/><rect x="18.50" y="333.50" width="3.0" height="3.0" fill="#fff" stroke="#000" stroke-width="1.0"/><path d="M30 334 V339.6 H24.4 Z" fill="#7c7b84"/><path d="M36.5 322.5 L43.5 317.4 L49 319.6 L43 325.4 Z" fill="#fff" stroke="#222" stroke-width="0.8" stroke-linejoin="round"/><path d="M43 325.4 L49 319.6 Q54 322 53.6 330 L47.2 334.6 Q48 328 43 325.4 Z" fill="url(#bls)" stroke="#222" stroke-width="0.8" stroke-linejoin="round"/><path d="M47.2 334.6 L53.6 330 V333.5 L46.6 338 Z" fill="#fff" stroke="#222" stroke-width="0.8" stroke-linejoin="round"/><path d="M58 334 V339.6 H52.4 Z" fill="#7c7b84"/><path d="M8.3 351.2 L17.6 354.8 V364.4 L8.3 361.6 Z" fill="#6c82ea"/><path d="M8.3 351.2 L15.4 346.3 L24.6 349.6 L17.6 354.8 Z" fill="#a4b2f8"/><path d="M17.6 354.8 L24.6 349.6 V358.6 L17.6 364.4 Z" fill="#3c4cb8"/><path d="M8.3 351.2 L15.4 346.3 L24.6 349.6 V358.6 L17.6 364.4 L8.3 361.6 Z" fill="none" stroke="#14183c" stroke-width="0.9" stroke-linejoin="round"/><path d="M30 362 V367.6 H24.4 Z" fill="#7c7b84"/><circle cx="48.7" cy="350.8" r="7" fill="url(#bls)" stroke="#161c50" stroke-width="0.9"/><path d="M41.7 351.6 Q48.7 353.8 55.7 351.6" fill="none" stroke="#1c2870" stroke-width="0.8"/><path d="M47.7 343.8 Q45.7 350.8 47.7 357.8" fill="none" stroke="#1c2870" stroke-width="0.8"/><circle cx="40.8" cy="358.6" r="7" fill="url(#bls)" stroke="#161c50" stroke-width="0.9"/><path d="M33.8 359.40000000000003 Q40.8 361.6 47.8 359.40000000000003" fill="none" stroke="#1c2870" stroke-width="0.8"/><path d="M39.8 351.6 Q37.8 358.6 39.8 365.6" fill="none" stroke="#1c2870" stroke-width="0.8"/><path d="M58 362 V367.6 H52.4 Z" fill="#7c7b84"/><ellipse cx="17" cy="375" rx="5.6" ry="2.5" fill="none" stroke="#1a1a20" stroke-width="1"/><path d="M6.4 380.6 Q17 386.4 27.6 380.6 V390 Q17 395.8 6.4 390 Z" fill="url(#blg)" stroke="#14183c" stroke-width="0.9" stroke-linejoin="round"/><ellipse cx="17" cy="388.6" rx="5.4" ry="2.5" fill="none" stroke="#fff" stroke-width="1.5"/><path d="M30 390 V395.6 H24.4 Z" fill="#7c7b84"/><path d="M43.5 374 Q49 378.5 55 378.4 Q50 384.5 46 392 Q40 388 34.5 388 Q41 381 43.5 374 Z" fill="url(#blg)" stroke="#1c2460" stroke-width="0.9" stroke-linejoin="round"/><path d="M40.6 379.5 Q46 383.6 51.6 383.2 M37.8 383.8 Q43 386.5 48.8 387.6 M47.4 376.6 Q43.5 383 38.5 388.4 M51.3 378 Q46.5 384.5 42.4 390" stroke="#2c3ca8" stroke-width="0.7" fill="none"/><path d="M58 390 V395.6 H52.4 Z" fill="#7c7b84"/><path d="M-4.4 -4.4 H-1 A1.5 1.5 0 1 1 1 -4.4 H4.4 V-1 A1.5 1.5 0 1 0 4.4 1 V4.4 H1 A1.5 1.5 0 1 0 -1 4.4 H-4.4 V1 A1.5 1.5 0 1 1 -4.4 -1 Z" fill="url(#org)" stroke="#2a1c04" stroke-width="0.8" stroke-linejoin="round" transform="translate(14.8 408) rotate(-14)"/><path d="M-4.4 -4.4 H-1 A1.5 1.5 0 1 1 1 -4.4 H4.4 V-1 A1.5 1.5 0 1 0 4.4 1 V4.4 H1 A1.5 1.5 0 1 0 -1 4.4 H-4.4 V1 A1.5 1.5 0 1 1 -4.4 -1 Z" fill="#fff" stroke="#1a1a1a" stroke-width="0.8" stroke-linejoin="round" transform="translate(21 414.6) rotate(166)"/><path d="M33 422.6 V412 L37.4 403.2 L38 416 L50.6 403 L45.2 416 L54.6 417.6 L45.6 419.2 L47.8 422.6 Z" fill="url(#org2)" stroke="none"/><path d="M33 412 L37.4 403.2 L38 416 L50.6 403 L45.2 416 L54.6 417.6 L45.6 419.2 L47.8 422.4" fill="none" stroke="#3a2000" stroke-width="0.7" stroke-linejoin="miter"/><path d="M17.2 441 L20.2 438.2 L26 444.6 L22.6 447.8 Z" fill="#fff" stroke="#222" stroke-width="0.8"/><rect x="6.6" y="438.2" width="10.6" height="4.4" fill="#fff" stroke="#111" stroke-width="1.1"/><path d="M16 429.4 H22.6 L17.6 441.8 H16 Z" fill="#1c3290"/><rect x="35.6" y="438.8" width="18" height="4.6" fill="#fff" stroke="#111" stroke-width="1.1"/><path d="M45 430 H52 L46.4 443.4 H45 Z" fill="#1c3290"/><circle cx="17" cy="463.8" r="3.9" fill="#111"/><circle cx="13.8" cy="469.6" r="3.9" fill="#111"/><circle cx="20.4" cy="469.6" r="3.9" fill="#111"/><circle cx="17" cy="463.8" r="2.7" fill="#9a9af2"/><circle cx="13.8" cy="469.6" r="2.5" fill="#fff"/><circle cx="20.4" cy="469.6" r="2.5" fill="#2a2a92"/><path d="M30 474 V479.6 H24.4 Z" fill="#7c7b84"/><circle cx="45" cy="462.8" r="3.4" fill="#9a9af2" stroke="#5a5ac0" stroke-width="0.6"/><circle cx="40" cy="471" r="3.2" fill="#fff" stroke="#15152a" stroke-width="0.9"/><circle cx="50" cy="471" r="3.5" fill="#26268a"/><path d="M7 490.8 Q12 488.6 16.5 492.4 Q21.6 497 21.6 505" fill="none" stroke="#111" stroke-width="1.3"/><rect x="10.70" y="488.70" width="2.6" height="2.6" fill="#fff" stroke="#000" stroke-width="1.0"/><rect x="20.70" y="498.70" width="2.6" height="2.6" fill="#fff" stroke="#000" stroke-width="1.0"/><path d="M34.8 491 Q42 489 46.4 494.4 Q50 499 49.4 505" fill="none" stroke="#111" stroke-width="1.7"/><path d="M34 486 H41 M43.5 487.5 L53 497 M54 500 V507" stroke="#111" stroke-width="1" stroke-dasharray="1 1.2" fill="none"/><rect x="40.70" y="484.70" width="2.6" height="2.6" fill="#fff" stroke="#000" stroke-width="1.0"/><rect x="52.70" y="496.70" width="2.6" height="2.6" fill="#fff" stroke="#000" stroke-width="1.0"/><path d="M58 502 V507.6 H52.4 Z" fill="#7c7b84"/><path d="M8.4 515.6 L10 512.6 L24.6 516.6 L24.4 522.6 L22.8 522 L21.6 519.6 L19.4 519.2 L19.2 529.6 L21.4 531.4 L20.4 533 L11.6 530.4 L12.6 528.6 L14.4 528.4 L14.4 517.6 L11.4 517 L9.8 519.4 L8.4 518.8 Z" fill="url(#blg)" stroke="#1c2460" stroke-width="0.9" stroke-linejoin="round"/><rect x="36.6" y="525.6" width="6" height="6" fill="url(#wsq)" stroke="#111" stroke-width="1.1"/><rect x="48.6" y="513.6" width="6" height="6" fill="url(#blg)" stroke="#111" stroke-width="1.1"/><path d="M43 525.2 L47.6 520.6" stroke="#111" stroke-width="1"/><path d="M48.2 520 L44.6 520.6 L47.6 523.6 Z" fill="#111"/><path d="M58 530 V535.6 H52.4 Z" fill="#7c7b84"/><rect x="8.6" y="541.6" width="6" height="6" fill="url(#blg)" stroke="#111" stroke-width="1.1"/><rect x="8.6" y="553.6" width="6" height="6" fill="url(#wsq)" stroke="#111" stroke-width="1.1"/><rect x="20.6" y="544.6" width="6" height="6" fill="url(#blg)" stroke="#111" stroke-width="1.1"/><rect x="16.6" y="547.8" width="6" height="6" fill="url(#blg)" stroke="#111" stroke-width="1.1"/><rect x="20.6" y="555.6" width="6" height="6" fill="url(#blg)" stroke="#111" stroke-width="1.1"/><rect x="34.6" y="542.6" width="5" height="14" fill="#fff" stroke="#111" stroke-width="1.1"/><path d="M40.4 545.4 Q45 545 47 548.4" fill="none" stroke="#111" stroke-width="1"/><path d="M47.8 549.4 L44.6 548.6 L47.6 546 Z" fill="#111"/><rect x="41.5" y="552" width="14" height="4.2" fill="url(#blg)" stroke="#111" stroke-width="1" transform="rotate(-42 48.5 554.1)"/><path d="M7.6 573.6 L18 577.2 V589 L7.6 585.4 Z" fill="#6c82ea"/><path d="M7.6 573.6 L15.6 568.6 L26.6 572 L18 577.2 Z" fill="#a4b2f8"/><path d="M18 577.2 L26.6 572 V583.4 L18 589 Z" fill="#3c4cb8"/><path d="M7.6 573.6 L15.6 568.6 L26.6 572 V583.4 L18 589 L7.6 585.4 Z" fill="none" stroke="#14183c" stroke-width="0.9" stroke-linejoin="round"/><path d="M13.6 581 L18.4 582.6 L22.4 580 V586.2 L18 589 L13.6 587.4 Z" fill="#fff" stroke="#14183c" stroke-width="0.8" stroke-linejoin="round"/><path d="M18.4 582.6 V588.8" stroke="#888" stroke-width="0.6"/><path d="M30 586 V591.6 H24.4 Z" fill="#7c7b84"/><path d="M35 587.6 L39.4 582.4 H55.6 L51 587.6 Z" fill="#6c82ea" stroke="#14183c" stroke-width="0.9" stroke-linejoin="round"/><path d="M39 584.6 V575.6 M45 584.6 V575.6 M51 584.6 V575.6" stroke="#fff" stroke-width="1.5"/><path d="M36.8 576.4 L39 572.6 L41.2 576.4 Z M42.8 576.4 L45 572.6 L47.2 576.4 Z M48.8 576.4 L51 572.6 L53.2 576.4 Z" fill="#fff"/><path d="M58 586 V591.6 H52.4 Z" fill="#7c7b84"/><rect x="7.6" y="597.6" width="4" height="4" fill="url(#blg)" stroke="#111" stroke-width="1.1"/><rect x="14.6" y="597.6" width="4" height="4" fill="url(#blg)" stroke="#111" stroke-width="1.1"/><rect x="21.6" y="597.6" width="4" height="4" fill="url(#blg)" stroke="#111" stroke-width="1.1"/><rect x="7.6" y="604.6" width="4" height="4" fill="url(#blg)" stroke="#111" stroke-width="1.1"/><rect x="14.6" y="604.6" width="4" height="4" fill="url(#blg)" stroke="#111" stroke-width="1.1"/><rect x="21.6" y="604.6" width="4" height="4" fill="url(#blg)" stroke="#111" stroke-width="1.1"/><rect x="7.6" y="611.6" width="4" height="4" fill="#fff" stroke="#111" stroke-width="1.1"/><rect x="14.6" y="611.6" width="4" height="4" fill="url(#blg)" stroke="#111" stroke-width="1.1"/><rect x="21.6" y="611.6" width="4" height="4" fill="url(#blg)" stroke="#111" stroke-width="1.1"/><path d="M30 614 V619.6 H24.4 Z" fill="#7c7b84"/><rect x="40.6" y="597.6" width="9" height="4.6" fill="#fff" stroke="#111" stroke-width="1.1"/><rect x="42.6" y="604.6" width="5" height="4" fill="#fff" stroke="#111" stroke-width="1.1"/><rect x="41.6" y="611.2" width="7" height="5.4" fill="#fff" stroke="#111" stroke-width="1.1"/><path d="M45 596 V618" stroke="#d02020" stroke-width="1.4"/><path d="M58 614 V619.6 H52.4 Z" fill="#7c7b84"/><path d="M15.6 625 L19.6 626.4 L17 632 L15 631 Z" fill="#fff" stroke="#111" stroke-width="0.8"/><path d="M7.6 629 Q9 627 11.4 627.6 L14.4 628.6 L14.4 643 L7.6 640.8 Z" fill="url(#wsq)" stroke="#111" stroke-width="0.9" stroke-linejoin="round"/><path d="M18.6 627 L25.4 629 L19.6 645 L12.8 642.8 Z" fill="url(#blg)" stroke="#14183c" stroke-width="0.9" stroke-linejoin="round"/><path d="M22.6 628.2 L25.4 629 L19.6 645 L17 644.2 Z" fill="#3c4cb8" opacity="0.6"/><path d="M30 642 V647.6 H24.4 Z" fill="#7c7b84"/><text x="50.8" y="638.6" text-anchor="middle" font-family="Liberation Sans,sans-serif" font-weight="bold" font-size="15" fill="#111">»</text></svg>
<div class="a" style="left:1088px;top:168px;width:192px;height:1px;background:#b9b6c8"></div>
<div class="a" style="left:1088px;top:170px;width:192px;height:1px;background:#cfcddc"></div>
<div class="a" style="left:1087px;top:194px;width:193px;height:476px;background:#fdf3ff;border-left:1px solid #aeacc4;border-right:1px solid #b4b2c8;border-top:1px solid #c4c2d6;border-bottom:1px solid #b0aec6;box-sizing:border-box"></div>
<svg style="left:1080px;top:170px" width="200" height="28" viewBox="1080 170 200 28"><defs><linearGradient id="ptg" x1="0" x2="0" y1="0" y2="1"><stop offset="0" stop-color="#efeef9"/><stop offset="1" stop-color="#dad9f0"/></linearGradient></defs><path d="M1087.5 194.5 L1087.5 176.5 Q1087.5 173.5 1090.5 173.5 L1140 173.5 Q1143 173.5 1145 176 L1152.5 186 L1152.5 194.5 Z" fill="url(#ptg)" stroke="#b4b2c8"/><path d="M1152.5 195 L1152.5 177 Q1152.5 173.5 1156 173.5 L1219 173.5 Q1222 173.5 1224.5 176.5 L1237 191 Q1240 194.5 1244 194.5 L1280 194.5 L1280 196 L1152.5 196 Z" fill="#fdf5ff" stroke="none"/><path d="M1152.5 194.5 L1152.5 177 Q1152.5 173.5 1156 173.5 L1219 173.5 Q1222 173.5 1224.5 176.5 L1237 191 Q1240 194.5 1244 194.5 L1280 194.5" fill="none" stroke="#b4b2c8"/></svg>
<span class="t " style="left:1110.00px;top:174.50px;font-size:12.5px;letter-spacing:-0.753px;color:#000;">Layers</span>
<span class="t " style="left:1175.00px;top:174.50px;font-size:12.5px;letter-spacing:-0.647px;color:#000;">Properties</span>
<svg style="left:1263px;top:177px" width="16" height="16" viewBox="-8 -8 16 16"><path d="M6.50 -1.13 L6.50 1.13 L4.86 1.17 L4.26 2.61 L5.40 3.80 L3.80 5.40 L2.61 4.26 L1.17 4.86 L1.13 6.50 L-1.13 6.50 L-1.17 4.86 L-2.61 4.26 L-3.80 5.40 L-5.40 3.80 L-4.26 2.61 L-4.86 1.17 L-6.50 1.13 L-6.50 -1.13 L-4.86 -1.17 L-4.26 -2.61 L-5.40 -3.80 L-3.80 -5.40 L-2.61 -4.26 L-1.17 -4.86 L-1.13 -6.50 L1.13 -6.50 L1.17 -4.86 L2.61 -4.26 L3.80 -5.40 L5.40 -3.80 L4.26 -2.61 L4.86 -1.17Z" fill="#f1eff9" stroke="#7a788e" stroke-width="0.95"/><circle r="1.6" fill="none" stroke="#7a788e" stroke-width="0.95"/></svg>
<svg style="left:0;top:0" width="1280" height="200" viewBox="0 0 1280 200"><g transform="translate(1092.2 176.4) scale(0.84) translate(-658.2 -133.4)"><g transform="translate(0.00 0.00)"><path d="M658 134 L675.8 137.7 V146.2 L665.5 151.6 L658.4 142.6 Z" fill="#1c2f8c" stroke="#14141e" stroke-width="1.1" stroke-linejoin="round"/><path d="M658.6 140.2 L666 143.4 V147 L659.4 142.6 Z" fill="#f4f4f8"/><path d="M659.8 143.4 L666 147.4 V148.6 L661.4 145.6 Z" fill="#e04020"/><path d="M666 143.4 L675.3 138.6 V141 L666 145.8 Z" fill="#d83010"/><path d="M666 145.8 L675.3 141 V143.2 L666 148 Z" fill="#f4f4f8"/><path d="M658.5 134.5 L675.3 138.2 L666 143.4 L658.7 140.4 Z" fill="#ff4c12"/><path d="M658.5 134.5 L675.3 138.2 L670 138.4 L659 136.4 Z" fill="#ff6a28" opacity="0.7"/></g></g><g transform="translate(1165.2 184) scale(0.84) translate(-694.5 -141.2)"><path d="M694.32 132.40 A8.8 8.8 0 0 1 699.81 134.19 L697.82 136.82 A5.5 5.5 0 0 0 694.39 135.70 Z" fill="#ff2020"/><path d="M699.53 133.98 A8.8 8.8 0 0 1 702.92 138.65 L699.76 139.61 A5.5 5.5 0 0 0 697.64 136.69 Z" fill="#ff9a10"/><path d="M702.81 138.31 A8.8 8.8 0 0 1 702.81 144.09 L699.70 143.00 A5.5 5.5 0 0 0 699.70 139.40 Z" fill="#f4e810"/><path d="M702.92 143.75 A8.8 8.8 0 0 1 699.53 148.42 L697.64 145.71 A5.5 5.5 0 0 0 699.76 142.79 Z" fill="#60d020"/><path d="M699.81 148.21 A8.8 8.8 0 0 1 694.32 150.00 L694.39 146.70 A5.5 5.5 0 0 0 697.82 145.58 Z" fill="#10c8a0"/><path d="M694.68 150.00 A8.8 8.8 0 0 1 689.19 148.21 L691.18 145.58 A5.5 5.5 0 0 0 694.61 146.70 Z" fill="#10a0e8"/><path d="M689.47 148.42 A8.8 8.8 0 0 1 686.08 143.75 L689.24 142.79 A5.5 5.5 0 0 0 691.36 145.71 Z" fill="#2838d0"/><path d="M686.19 144.09 A8.8 8.8 0 0 1 686.19 138.31 L689.30 139.40 A5.5 5.5 0 0 0 689.30 143.00 Z" fill="#7a18b8"/><path d="M686.08 138.65 A8.8 8.8 0 0 1 689.47 133.98 L691.36 136.69 A5.5 5.5 0 0 0 689.24 139.61 Z" fill="#c010a0"/><path d="M689.19 134.19 A8.8 8.8 0 0 1 694.68 132.40 L694.61 135.70 A5.5 5.5 0 0 0 691.18 136.82 Z" fill="#e01060"/><circle cx="694.5" cy="141.2" r="8.9" fill="none" stroke="#2a1a3a" stroke-width="0.9" opacity="0.85"/><circle cx="694.5" cy="141.2" r="5.5" fill="#fff" stroke="#4a4a60" stroke-width="0.6"/></g></svg>
<svg style="left:0;top:0" width="0" height="0"><defs><linearGradient id="cbg" x1="0" x2="1" y1="0" y2="1"><stop offset="0" stop-color="#cdcdd8"/><stop offset="0.6" stop-color="#f0f0f6"/><stop offset="1" stop-color="#ffffff"/></linearGradient></defs></svg><div class="a" style="left:1092px;top:203px;width:180px;height:413.3px;background:#fdf6ff;outline:1px solid #dcd9e8"></div><div class="a" style="left:1092px;top:223.7px;width:180px;height:1px;background:#e0dcea"></div><span class="t " style="left:1095.00px;top:204.50px;font-size:12.5px;letter-spacing:-1.051px;color:#111;">Viewport</span><div class="a" style="left:1092px;top:242.8px;width:180px;height:1px;background:#e0dcea"></div><div class="a" style="left:1092px;top:224.7px;width:8px;height:18.1px;background:#efecf8"></div><div class="a" style="left:1100px;top:224.7px;width:82px;height:18.1px;background:#fefbff"></div><div class="a" style="left:1182.5px;top:224.7px;width:89.5px;height:18.1px;background:#fffdff"></div><div class="a" style="left:1181.5px;top:224.2px;width:1px;height:19.1px;background:#e0dcea"></div><span class="t " style="left:1104.00px;top:224.65px;font-size:12.5px;letter-spacing:-0.830px;color:#111;">Title</span><span class="t " style="left:1188.00px;top:224.65px;font-size:12.5px;letter-spacing:-0.885px;color:#111;">Top</span><div class="a" style="left:1092px;top:261.9px;width:180px;height:1px;background:#e0dcea"></div><div class="a" style="left:1092px;top:243.8px;width:8px;height:18.1px;background:#efecf8"></div><div class="a" style="left:1100px;top:243.8px;width:82px;height:18.1px;background:#fefbff"></div><div class="a" style="left:1182.5px;top:243.8px;width:89.5px;height:18.1px;background:#dddbe8"></div><div class="a" style="left:1181.5px;top:243.3px;width:1px;height:19.1px;background:#e0dcea"></div><span class="t " style="left:1104.50px;top:243.75px;font-size:12.5px;letter-spacing:-0.890px;color:#77757f;">Width</span><span class="t " style="left:1188.00px;top:243.75px;font-size:12.5px;letter-spacing:-1.202px;color:#77757f;">1012</span><div class="a" style="left:1092px;top:281.0px;width:180px;height:1px;background:#e0dcea"></div><div class="a" style="left:1092px;top:262.9px;width:8px;height:18.1px;background:#efecf8"></div><div class="a" style="left:1100px;top:262.9px;width:82px;height:18.1px;background:#fefbff"></div><div class="a" style="left:1182.5px;top:262.9px;width:89.5px;height:18.1px;background:#dddbe8"></div><div class="a" style="left:1181.5px;top:262.4px;width:1px;height:19.1px;background:#e0dcea"></div><span class="t " style="left:1104.50px;top:262.85px;font-size:12.5px;letter-spacing:-1.106px;color:#77757f;">Height</span><span class="t " style="left:1188.00px;top:262.85px;font-size:12.5px;letter-spacing:-1.285px;color:#77757f;">484</span><div class="a" style="left:1092px;top:300.1px;width:180px;height:1px;background:#e0dcea"></div><div class="a" style="left:1092px;top:282.0px;width:8px;height:18.1px;background:#efecf8"></div><div class="a" style="left:1100px;top:282.0px;width:82px;height:18.1px;background:#fefbff"></div><div class="a" style="left:1182.5px;top:282.0px;width:89.5px;height:18.1px;background:#fffdff"></div><div class="a" style="left:1181.5px;top:281.5px;width:1px;height:19.1px;background:#e0dcea"></div><span class="t " style="left:1104.50px;top:281.95px;font-size:12.5px;letter-spacing:-1.009px;color:#111;">Projection</span><span class="t " style="left:1187.00px;top:281.95px;font-size:12.5px;letter-spacing:-1.148px;color:#111;">Parallel</span><svg style="left:1254px;top:282.0px" width="18" height="19"><rect x="0" y="0" width="18" height="18.4" fill="url(#btg)"/><path d="M0.5 18.4 V0.5 H18" fill="none" stroke="#5e5c70"/><path d="M17.5 1 V18 H1" fill="none" stroke="#c9c7d8"/><path d="M6.3 7.6 H13.3 L9.8 11.8 Z" fill="#111"/></svg><div class="a" style="left:1092px;top:322.8px;width:180px;height:1px;background:#e0dcea"></div><span class="t " style="left:1095.00px;top:302.85px;font-size:12.5px;letter-spacing:-1.576px;color:#111;">Camera</span><div class="a" style="left:1092px;top:341.9px;width:180px;height:1px;background:#e0dcea"></div><div class="a" style="left:1092px;top:323.8px;width:8px;height:18.1px;background:#efecf8"></div><div class="a" style="left:1100px;top:323.8px;width:82px;height:18.1px;background:#fefbff"></div><div class="a" style="left:1182.5px;top:323.8px;width:89.5px;height:18.1px;background:#dddbe8"></div><div class="a" style="left:1181.5px;top:323.3px;width:1px;height:19.1px;background:#e0dcea"></div><span class="t " style="left:1104.50px;top:323.75px;font-size:12.5px;letter-spacing:-1.028px;color:#77757f;">Lens Length</span><span class="t " style="left:1187.20px;top:323.75px;font-size:12.5px;letter-spacing:-1.032px;color:#77757f;">50.0</span><div class="a" style="left:1092px;top:361.0px;width:180px;height:1px;background:#e0dcea"></div><div class="a" style="left:1092px;top:342.9px;width:8px;height:18.1px;background:#efecf8"></div><div class="a" style="left:1100px;top:342.9px;width:82px;height:18.1px;background:#fefbff"></div><div class="a" style="left:1182.5px;top:342.9px;width:89.5px;height:18.1px;background:#fffdff"></div><div class="a" style="left:1181.5px;top:342.4px;width:1px;height:19.1px;background:#e0dcea"></div><span class="t " style="left:1104.50px;top:342.85px;font-size:12.5px;letter-spacing:-1.007px;color:#111;">Rotation</span><span class="t " style="left:1188.00px;top:342.85px;font-size:12.5px;letter-spacing:-1.082px;color:#111;">90.0</span><div class="a" style="left:1092px;top:380.1px;width:180px;height:1px;background:#e0dcea"></div><div class="a" style="left:1092px;top:362.0px;width:8px;height:18.1px;background:#efecf8"></div><div class="a" style="left:1100px;top:362.0px;width:82px;height:18.1px;background:#fefbff"></div><div class="a" style="left:1182.5px;top:362.0px;width:89.5px;height:18.1px;background:#fffdff"></div><div class="a" style="left:1181.5px;top:361.5px;width:1px;height:19.1px;background:#e0dcea"></div><span class="t " style="left:1104.50px;top:361.95px;font-size:12.5px;letter-spacing:-0.957px;color:#111;">X Location</span><span class="t " style="left:1186.80px;top:361.95px;font-size:12.5px;letter-spacing:-1.007px;color:#111;">-6.544</span><div class="a" style="left:1092px;top:399.2px;width:180px;height:1px;background:#e0dcea"></div><div class="a" style="left:1092px;top:381.1px;width:8px;height:18.1px;background:#efecf8"></div><div class="a" style="left:1100px;top:381.1px;width:82px;height:18.1px;background:#fefbff"></div><div class="a" style="left:1182.5px;top:381.1px;width:89.5px;height:18.1px;background:#fffdff"></div><div class="a" style="left:1181.5px;top:380.6px;width:1px;height:19.1px;background:#e0dcea"></div><span class="t " style="left:1104.50px;top:381.05px;font-size:12.5px;letter-spacing:-0.934px;color:#111;">Y Location</span><span class="t " style="left:1188.00px;top:381.05px;font-size:12.5px;letter-spacing:-1.056px;color:#111;">0.098</span><div class="a" style="left:1092px;top:418.3px;width:180px;height:1px;background:#e0dcea"></div><div class="a" style="left:1092px;top:400.2px;width:8px;height:18.1px;background:#efecf8"></div><div class="a" style="left:1100px;top:400.2px;width:82px;height:18.1px;background:#fefbff"></div><div class="a" style="left:1182.5px;top:400.2px;width:89.5px;height:18.1px;background:#fffdff"></div><div class="a" style="left:1181.5px;top:399.7px;width:1px;height:19.1px;background:#e0dcea"></div><span class="t " style="left:1104.50px;top:400.15px;font-size:12.5px;letter-spacing:-0.887px;color:#111;">Z Location</span><span class="t " style="left:1188.00px;top:400.15px;font-size:12.5px;letter-spacing:-1.056px;color:#111;">0.156</span><div class="a" style="left:1092px;top:437.4px;width:180px;height:1px;background:#e0dcea"></div><div class="a" style="left:1092px;top:419.3px;width:8px;height:18.1px;background:#efecf8"></div><div class="a" style="left:1100px;top:419.3px;width:82px;height:18.1px;background:#fefbff"></div><div class="a" style="left:1182.5px;top:419.3px;width:89.5px;height:18.1px;background:#fffdff"></div><div class="a" style="left:1181.5px;top:418.8px;width:1px;height:19.1px;background:#e0dcea"></div><span class="t " style="left:1104.50px;top:419.25px;font-size:12.5px;letter-spacing:-0.970px;color:#111;">Location</span><svg style="left:1184px;top:420.0px" width="89" height="19"><defs><linearGradient id="btg" x1="0" x2="0" y1="0" y2="1"><stop offset="0" stop-color="#f7f6fc"/><stop offset="0.5" stop-color="#eceaf4"/><stop offset="0.55" stop-color="#dddbe9"/><stop offset="1" stop-color="#cfcddd"/></linearGradient></defs><rect x="0.5" y="1" width="87" height="16" rx="2.5" fill="url(#btg)" stroke="#6f6d80"/></svg><span class="t " style="left:1211.00px;top:419.25px;font-size:12.5px;letter-spacing:-0.836px;color:#000;">Place...</span><div class="a" style="left:1092px;top:460.1px;width:180px;height:1px;background:#e0dcea"></div><span class="t " style="left:1095.00px;top:440.15px;font-size:12.5px;letter-spacing:-0.540px;color:#111;">Target</span><div class="a" style="left:1092px;top:479.2px;width:180px;height:1px;background:#e0dcea"></div><div class="a" style="left:1092px;top:461.1px;width:8px;height:18.1px;background:#efecf8"></div><div class="a" style="left:1100px;top:461.1px;width:82px;height:18.1px;background:#fefbff"></div><div class="a" style="left:1182.5px;top:461.1px;width:89.5px;height:18.1px;background:#fffdff"></div><div class="a" style="left:1181.5px;top:460.6px;width:1px;height:19.1px;background:#e0dcea"></div><span class="t " style="left:1104.50px;top:461.05px;font-size:12.5px;letter-spacing:-0.853px;color:#111;">X Target</span><span class="t " style="left:1186.80px;top:461.05px;font-size:12.5px;letter-spacing:-1.007px;color:#111;">-6.544</span><div class="a" style="left:1092px;top:498.3px;width:180px;height:1px;background:#e0dcea"></div><div class="a" style="left:1092px;top:480.2px;width:8px;height:18.1px;background:#efecf8"></div><div class="a" style="left:1100px;top:480.2px;width:82px;height:18.1px;background:#fefbff"></div><div class="a" style="left:1182.5px;top:480.2px;width:89.5px;height:18.1px;background:#fffdff"></div><div class="a" style="left:1181.5px;top:479.7px;width:1px;height:19.1px;background:#e0dcea"></div><span class="t " style="left:1104.50px;top:480.15px;font-size:12.5px;letter-spacing:-0.825px;color:#111;">Y Target</span><span class="t " style="left:1188.00px;top:480.15px;font-size:12.5px;letter-spacing:-1.056px;color:#111;">0.098</span><div class="a" style="left:1092px;top:517.4px;width:180px;height:1px;background:#e0dcea"></div><div class="a" style="left:1092px;top:499.3px;width:8px;height:18.1px;background:#efecf8"></div><div class="a" style="left:1100px;top:499.3px;width:82px;height:18.1px;background:#fefbff"></div><div class="a" style="left:1182.5px;top:499.3px;width:89.5px;height:18.1px;background:#fffdff"></div><div class="a" style="left:1181.5px;top:498.8px;width:1px;height:19.1px;background:#e0dcea"></div><span class="t " style="left:1104.50px;top:499.25px;font-size:12.5px;letter-spacing:-0.766px;color:#111;">Z Target</span><span class="t " style="left:1188.00px;top:499.25px;font-size:12.5px;letter-spacing:-1.056px;color:#111;">0.000</span><div class="a" style="left:1092px;top:536.5px;width:180px;height:1px;background:#e0dcea"></div><div class="a" style="left:1092px;top:518.4px;width:8px;height:18.1px;background:#efecf8"></div><div class="a" style="left:1100px;top:518.4px;width:82px;height:18.1px;background:#fefbff"></div><div class="a" style="left:1182.5px;top:518.4px;width:89.5px;height:18.1px;background:#fffdff"></div><div class="a" style="left:1181.5px;top:517.9px;width:1px;height:19.1px;background:#e0dcea"></div><span class="t " style="left:1104.50px;top:518.35px;font-size:12.5px;letter-spacing:-0.970px;color:#111;">Location</span><svg style="left:1184px;top:519.1px" width="89" height="19"><defs><linearGradient id="btg" x1="0" x2="0" y1="0" y2="1"><stop offset="0" stop-color="#f7f6fc"/><stop offset="0.5" stop-color="#eceaf4"/><stop offset="0.55" stop-color="#dddbe9"/><stop offset="1" stop-color="#cfcddd"/></linearGradient></defs><rect x="0.5" y="1" width="87" height="16" rx="2.5" fill="url(#btg)" stroke="#6f6d80"/></svg><span class="t " style="left:1211.00px;top:518.35px;font-size:12.5px;letter-spacing:-0.836px;color:#000;">Place...</span><div class="a" style="left:1092px;top:559.0px;width:180px;height:1px;background:#e0dcea"></div><span class="t " style="left:1095.00px;top:539.15px;font-size:12.5px;letter-spacing:-0.923px;color:#111;">Wallpaper</span><div class="a" style="left:1092px;top:578.0px;width:180px;height:1px;background:#e0dcea"></div><div class="a" style="left:1092px;top:560.0px;width:8px;height:18.0px;background:#efecf8"></div><div class="a" style="left:1100px;top:560.0px;width:82px;height:18.0px;background:#fefbff"></div><div class="a" style="left:1182.5px;top:560.0px;width:89.5px;height:18.0px;background:#fffdff"></div><div class="a" style="left:1181.5px;top:559.5px;width:1px;height:19.0px;background:#e0dcea"></div><span class="t " style="left:1104.50px;top:559.90px;font-size:12.5px;letter-spacing:-1.301px;color:#111;">Filename</span><span class="t " style="left:1185.00px;top:559.90px;font-size:12.5px;letter-spacing:-1.022px;color:#111;">(none)</span><svg style="left:1254px;top:560.5px" width="19" height="18"><rect x="1" y="0.5" width="16" height="16" rx="2.5" fill="url(#btg)" stroke="#8c8a9c"/></svg><span class="t " style="left:1259.00px;top:560.00px;font-size:11px;letter-spacing:-0.389px;color:#000;">...</span><div class="a" style="left:1092px;top:597.0px;width:180px;height:1px;background:#e0dcea"></div><div class="a" style="left:1092px;top:579.0px;width:8px;height:18.0px;background:#efecf8"></div><div class="a" style="left:1100px;top:579.0px;width:82px;height:18.0px;background:#fefbff"></div><div class="a" style="left:1182.5px;top:579.0px;width:89.5px;height:18.0px;background:#fffdff"></div><div class="a" style="left:1181.5px;top:578.5px;width:1px;height:19.0px;background:#e0dcea"></div><span class="t " style="left:1104.50px;top:578.90px;font-size:12.5px;letter-spacing:-1.442px;color:#111;">Show</span><svg style="left:1187.0px;top:581.0px" width="13" height="13"><rect x="0.5" y="0.5" width="11.8" height="11.8" fill="#fbfbfe" stroke="#8a8a9e"/><rect x="2.3" y="2.3" width="8" height="8" fill="url(#cbg)" stroke="#c6c6d4" stroke-width="0.6"/><path d="M3.2 6.6 L5.6 9.7 L9.6 2.6" fill="none" stroke="#3c50a8" stroke-width="1.8" stroke-linejoin="round"/></svg><div class="a" style="left:1092px;top:615.8px;width:180px;height:1px;background:#e0dcea"></div><div class="a" style="left:1092px;top:598.0px;width:8px;height:17.8px;background:#efecf8"></div><div class="a" style="left:1100px;top:598.0px;width:82px;height:17.8px;background:#fefbff"></div><div class="a" style="left:1182.5px;top:598.0px;width:89.5px;height:17.8px;background:#fffdff"></div><div class="a" style="left:1181.5px;top:597.5px;width:1px;height:18.8px;background:#e0dcea"></div><span class="t " style="left:1104.50px;top:597.80px;font-size:12.5px;letter-spacing:-1.397px;color:#111;">Gray</span><svg style="left:1187.0px;top:600.0px" width="13" height="13"><rect x="0.5" y="0.5" width="11.8" height="11.8" fill="#fbfbfe" stroke="#8a8a9e"/><rect x="2.3" y="2.3" width="8" height="8" fill="url(#cbg)" stroke="#c6c6d4" stroke-width="0.6"/><path d="M3.2 6.6 L5.6 9.7 L9.6 2.6" fill="none" stroke="#3c50a8" stroke-width="1.8" stroke-linejoin="round"/></svg>
<div class="a" style="left:5px;top:679px;width:1px;height:20px;background:#b9b6c8"></div>
<div class="a" style="left:7px;top:679px;width:1px;height:20px;background:#cfcddc"></div>
<svg style="left:13.0px;top:682.0px" width="13" height="13"><rect x="0.5" y="0.5" width="11.8" height="11.8" fill="#fbfbfe" stroke="#8a8a9e"/><rect x="2.3" y="2.3" width="8" height="8" fill="url(#cbg)" stroke="#c6c6d4" stroke-width="0.6"/><path d="M3.2 6.6 L5.6 9.7 L9.6 2.6" fill="none" stroke="#3c50a8" stroke-width="1.8" stroke-linejoin="round"/></svg><span class="t " style="left:31.00px;top:678.70px;font-size:12.5px;letter-spacing:-1.414px;color:#000;">End</span><svg style="left:57.0px;top:682.0px" width="13" height="13"><rect x="0.5" y="0.5" width="11.8" height="11.8" fill="#fbfbfe" stroke="#8a8a9e"/><rect x="2.3" y="2.3" width="8" height="8" fill="url(#cbg)" stroke="#c6c6d4" stroke-width="0.6"/><path d="M3.2 6.6 L5.6 9.7 L9.6 2.6" fill="none" stroke="#3c50a8" stroke-width="1.8" stroke-linejoin="round"/></svg><span class="t " style="left:75.00px;top:678.70px;font-size:12.5px;letter-spacing:-1.023px;color:#000;">Near</span><svg style="left:106.0px;top:682.0px" width="13" height="13"><rect x="0.5" y="0.5" width="11.8" height="11.8" fill="#fbfbfe" stroke="#8a8a9e"/><rect x="2.3" y="2.3" width="8" height="8" fill="url(#cbg)" stroke="#c6c6d4" stroke-width="0.6"/></svg><span class="t " style="left:123.00px;top:678.70px;font-size:12.5px;letter-spacing:-1.098px;color:#000;">Point</span><svg style="left:155.0px;top:682.0px" width="13" height="13"><rect x="0.5" y="0.5" width="11.8" height="11.8" fill="#fbfbfe" stroke="#8a8a9e"/><rect x="2.3" y="2.3" width="8" height="8" fill="url(#cbg)" stroke="#c6c6d4" stroke-width="0.6"/></svg><span class="t " style="left:172.00px;top:678.70px;font-size:12.5px;letter-spacing:-1.214px;color:#000;">Mid</span><svg style="left:197.0px;top:682.0px" width="13" height="13"><rect x="0.5" y="0.5" width="11.8" height="11.8" fill="#fbfbfe" stroke="#8a8a9e"/><rect x="2.3" y="2.3" width="8" height="8" fill="url(#cbg)" stroke="#c6c6d4" stroke-width="0.6"/></svg><span class="t " style="left:214.00px;top:678.70px;font-size:12.5px;letter-spacing:-1.477px;color:#000;">Cen</span><svg style="left:240.0px;top:682.0px" width="13" height="13"><rect x="0.5" y="0.5" width="11.8" height="11.8" fill="#fbfbfe" stroke="#8a8a9e"/><rect x="2.3" y="2.3" width="8" height="8" fill="url(#cbg)" stroke="#c6c6d4" stroke-width="0.6"/></svg><span class="t " style="left:258.00px;top:678.70px;font-size:12.5px;letter-spacing:-0.966px;color:#000;">Int</span><svg style="left:277.0px;top:682.0px" width="13" height="13"><rect x="0.5" y="0.5" width="11.8" height="11.8" fill="#fbfbfe" stroke="#8a8a9e"/><rect x="2.3" y="2.3" width="8" height="8" fill="url(#cbg)" stroke="#c6c6d4" stroke-width="0.6"/></svg><span class="t " style="left:295.00px;top:678.70px;font-size:12.5px;letter-spacing:-1.351px;color:#000;">Perp</span><svg style="left:324.0px;top:682.0px" width="13" height="13"><rect x="0.5" y="0.5" width="11.8" height="11.8" fill="#fbfbfe" stroke="#8a8a9e"/><rect x="2.3" y="2.3" width="8" height="8" fill="url(#cbg)" stroke="#c6c6d4" stroke-width="0.6"/></svg><span class="t " style="left:342.50px;top:678.70px;font-size:12.5px;letter-spacing:-0.885px;color:#000;">Tan</span><svg style="left:369.0px;top:682.0px" width="13" height="13"><rect x="0.5" y="0.5" width="11.8" height="11.8" fill="#fbfbfe" stroke="#8a8a9e"/><rect x="2.3" y="2.3" width="8" height="8" fill="url(#cbg)" stroke="#c6c6d4" stroke-width="0.6"/></svg><span class="t " style="left:386.00px;top:678.70px;font-size:12.5px;letter-spacing:-1.395px;color:#000;">Quad</span><svg style="left:420.0px;top:682.0px" width="13" height="13"><rect x="0.5" y="0.5" width="11.8" height="11.8" fill="#fbfbfe" stroke="#8a8a9e"/><rect x="2.3" y="2.3" width="8" height="8" fill="url(#cbg)" stroke="#c6c6d4" stroke-width="0.6"/></svg><span class="t " style="left:437.00px;top:678.70px;font-size:12.5px;letter-spacing:-1.179px;color:#000;">Knot</span><svg style="left:467.0px;top:682.0px" width="13" height="13"><rect x="0.5" y="0.5" width="11.8" height="11.8" fill="#fbfbfe" stroke="#8a8a9e"/><rect x="2.3" y="2.3" width="8" height="8" fill="url(#cbg)" stroke="#c6c6d4" stroke-width="0.6"/></svg><span class="t " style="left:484.00px;top:678.70px;font-size:12.5px;letter-spacing:-0.990px;color:#000;">Vertex</span><svg style="left:520.2px;top:681.3px" width="16" height="16"><defs><linearGradient id="rcb" x1="0" x2="0" y1="0" y2="1"><stop offset="0" stop-color="#fbfbfe"/><stop offset="0.5" stop-color="#eeedf6"/><stop offset="1" stop-color="#cfcddc"/></linearGradient></defs><rect x="0.6" y="0.6" width="13.6" height="13.8" rx="3.4" fill="url(#rcb)" stroke="#77758c" stroke-width="1"/></svg><span class="t " style="left:539.50px;top:678.70px;font-size:12.5px;letter-spacing:-1.058px;color:#000;">Project</span><svg style="left:578.2px;top:681.3px" width="16" height="16"><defs><linearGradient id="rcb" x1="0" x2="0" y1="0" y2="1"><stop offset="0" stop-color="#fbfbfe"/><stop offset="0.5" stop-color="#eeedf6"/><stop offset="1" stop-color="#cfcddc"/></linearGradient></defs><rect x="0.6" y="0.6" width="13.6" height="13.8" rx="3.4" fill="url(#rcb)" stroke="#77758c" stroke-width="1"/></svg><span class="t " style="left:598.00px;top:678.70px;font-size:12.5px;letter-spacing:-1.241px;color:#000;">Disable</span>
<div class="a" style="left:2px;top:702px;width:1278px;height:18px;background:#e4e1f0"></div>
<div class="a" style="left:2px;top:701px;width:1278px;height:1px;background:#adabc3"></div>
<div class="a" style="left:707px;top:702px;width:53px;height:18px;background:#f0f3fd"></div>
<div class="a" style="left:761px;top:702px;width:53px;height:18px;background:#f0f3fd"></div>
<div class="a" style="left:58.0px;top:702px;width:1px;height:18px;background:#a9a7be"></div>
<div class="a" style="left:145.5px;top:702px;width:1px;height:18px;background:#a9a7be"></div>
<div class="a" style="left:233.5px;top:702px;width:1px;height:18px;background:#a9a7be"></div>
<div class="a" style="left:322.0px;top:702px;width:1px;height:18px;background:#a9a7be"></div>
<div class="a" style="left:409.5px;top:702px;width:1px;height:18px;background:#a9a7be"></div>
<div class="a" style="left:583.5px;top:702px;width:1px;height:18px;background:#a9a7be"></div>
<div class="a" style="left:659.5px;top:702px;width:1px;height:18px;background:#a9a7be"></div>
<div class="a" style="left:706.0px;top:702px;width:1px;height:18px;background:#a9a7be"></div>
<div class="a" style="left:759.5px;top:702px;width:1px;height:18px;background:#a9a7be"></div>
<div class="a" style="left:813.5px;top:702px;width:1px;height:18px;background:#a9a7be"></div>
<div class="a" style="left:899.5px;top:702px;width:1px;height:18px;background:#a9a7be"></div>
<div class="a" style="left:965.5px;top:702px;width:1px;height:18px;background:#a9a7be"></div>
<div class="a" style="left:1073.5px;top:702px;width:1px;height:18px;background:#a9a7be"></div>
<div class="a" style="left:1118.5px;top:702px;width:1px;height:18px;background:#a9a7be"></div>
<div class="a" style="left:1253.0px;top:702px;width:1px;height:18px;background:#a9a7be"></div>
<span class="t " style="left:10.00px;top:701.70px;font-size:12.5px;letter-spacing:-0.250px;color:#000;">CPlane</span>
<span class="t " style="left:80.50px;top:701.70px;font-size:12.5px;letter-spacing:-0.208px;color:#000;">x -10.12</span>
<span class="t " style="left:175.50px;top:701.70px;font-size:12.5px;letter-spacing:-0.425px;color:#000;">y 5.20</span>
<span class="t " style="left:262.00px;top:701.70px;font-size:12.5px;letter-spacing:-0.259px;color:#000;">z 0.00</span>
<span class="t " style="left:340.00px;top:701.70px;font-size:12.5px;letter-spacing:-0.072px;color:#000;">13.42 mm</span>
<span class="t " style="left:430.00px;top:701.70px;font-size:12.5px;letter-spacing:-0.015px;color:#000;">Default</span>
<span class="t " style="left:594.50px;top:701.70px;font-size:12.5px;letter-spacing:-0.198px;color:#000;">Grid Snap</span>
<span class="t " style="left:668.50px;top:701.70px;font-size:12.5px;letter-spacing:-0.452px;color:#000;">Ortho</span>
<span class="t " style="left:715.00px;top:701.70px;font-size:12.5px;letter-spacing:-0.369px;color:#000;font-weight:bold;">Planar</span>
<span class="t " style="left:769.00px;top:701.70px;font-size:12.5px;letter-spacing:-0.380px;color:#000;font-weight:bold;">Osnap</span>
<span class="t " style="left:826.00px;top:701.70px;font-size:12.5px;letter-spacing:-0.062px;color:#000;">SmartTrack</span>
<span class="t " style="left:909.00px;top:701.70px;font-size:12.5px;letter-spacing:0.065px;color:#000;">Gumball</span>
<span class="t " style="left:980.00px;top:701.70px;font-size:12.5px;letter-spacing:-0.083px;color:#000;">Record History</span>
<span class="t " style="left:1084.00px;top:701.70px;font-size:12.5px;letter-spacing:-0.130px;color:#000;">Filter</span>
<span class="t " style="left:1123.00px;top:701.70px;font-size:12.5px;letter-spacing:-0.170px;color:#000;">Minutes from last sav...</span>
<div class="a" style="left:414px;top:705px;width:14px;height:14px;background:#000"></div>
</body></html>
